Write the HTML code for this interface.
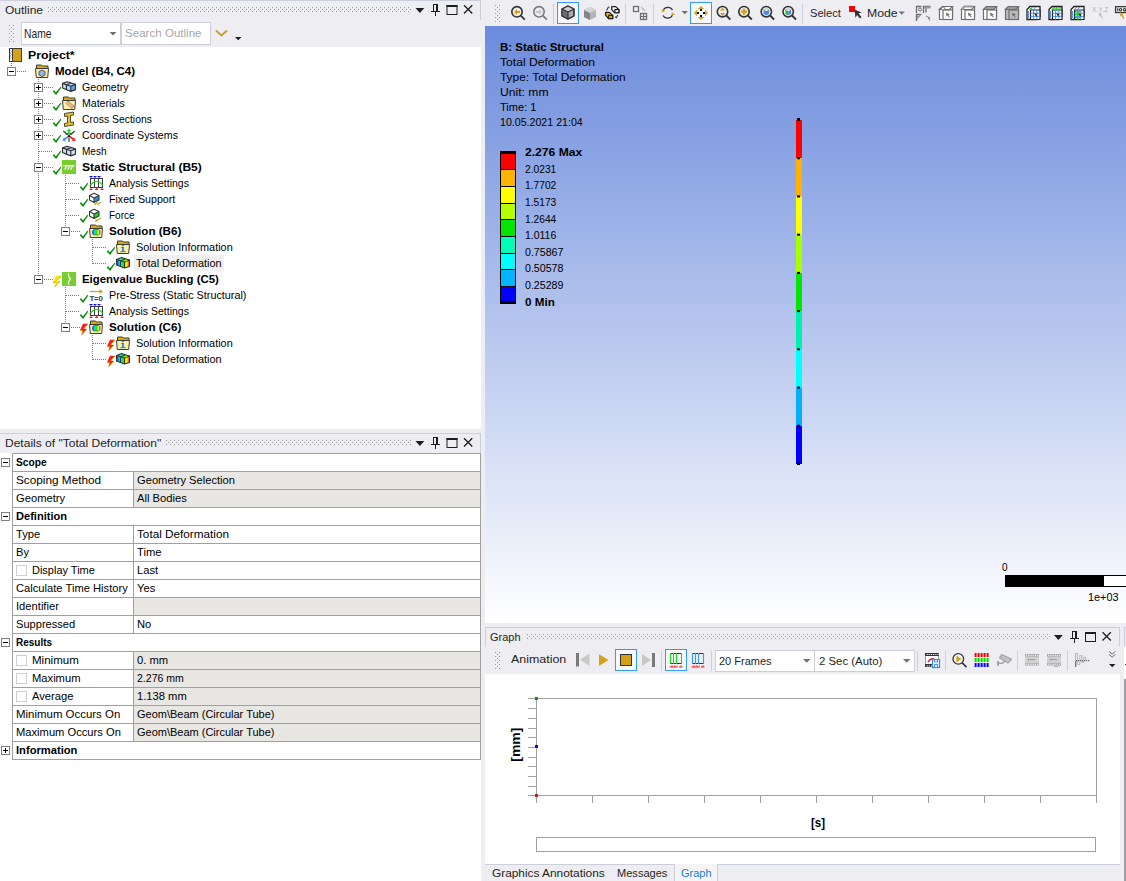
<!DOCTYPE html><html><head><meta charset="utf-8"><style>
*{box-sizing:border-box}
body{margin:0;width:1126px;height:881px;position:relative;overflow:hidden;background:#eeeef2;font-family:"Liberation Sans",sans-serif;font-size:12px;color:#000}
.a{position:absolute}
.t{position:absolute;white-space:nowrap;line-height:1;z-index:5}
svg{position:absolute;left:0;top:0}
</style></head><body><div class="a" style="left:0px;top:0px;width:481px;height:1px;background:#cccedb;"></div>
<div class="a" style="left:480px;top:0px;width:1px;height:20px;background:#cccedb;"></div>
<div class="a" style="left:21px;top:22px;width:100px;height:23px;background:#fff;border:1px solid #cccedb"></div>
<div class="a" style="left:121px;top:22px;width:90px;height:23px;background:#fff;border:1px solid #cccedb"></div>
<div class="a" style="left:0px;top:47px;width:481px;height:382px;background:#fff;"></div>
<div class="a" style="left:0px;top:433px;width:481px;height:1px;background:#cccedb;"></div>
<div class="a" style="left:480px;top:433px;width:1px;height:20px;background:#cccedb;"></div>
<div class="a" style="left:0px;top:453px;width:481px;height:428px;background:#fff;"></div>
<div class="a" style="left:134px;top:255px;width:90px;height:16px;background:#f0f0f0;"></div>
<div class="a" style="left:553px;top:4px;width:1px;height:20px;background:#ccd0dd;"></div>
<div class="a" style="left:625px;top:4px;width:1px;height:20px;background:#ccd0dd;"></div>
<div class="a" style="left:653px;top:4px;width:1px;height:20px;background:#ccd0dd;"></div>
<div class="a" style="left:802px;top:4px;width:1px;height:20px;background:#ccd0dd;"></div>
<div class="a" style="left:557px;top:2px;width:22px;height:22px;border:1px solid #3399ff;background:#f7f8fb"></div>
<div class="a" style="left:690px;top:2px;width:22px;height:22px;border:1px solid #3399ff;background:#f7f8fb"></div>
<div class="a" style="left:485px;top:26px;width:641px;height:597px;background:linear-gradient(#6b8bdc,#ffffff);"></div>
<div class="a" style="left:485px;top:627px;width:635px;height:1px;background:#cccedb;"></div>
<div class="a" style="left:485px;top:627px;width:1px;height:20px;background:#cccedb;"></div>
<div class="a" style="left:1119px;top:627px;width:1px;height:20px;background:#cccedb;"></div>
<div class="a" style="left:615px;top:649px;width:22px;height:22px;border:1px solid #3399ff;background:#f7f8fb"></div>
<div class="a" style="left:665px;top:649px;width:22px;height:22px;border:1px solid #3399ff;background:#f7f8fb"></div>
<div class="a" style="left:661px;top:651px;width:1px;height:20px;background:#ccd0dd;"></div>
<div class="a" style="left:711px;top:651px;width:1px;height:20px;background:#ccd0dd;"></div>
<div class="a" style="left:715px;top:650px;width:100px;height:22px;background:#fff;border:1px solid #cccedb"></div>
<div class="a" style="left:814px;top:650px;width:101px;height:22px;background:#fff;border:1px solid #cccedb"></div>
<div class="a" style="left:917px;top:651px;width:1px;height:20px;background:#ccd0dd;"></div>
<div class="a" style="left:945px;top:651px;width:1px;height:20px;background:#ccd0dd;"></div>
<div class="a" style="left:1017px;top:651px;width:1px;height:20px;background:#ccd0dd;"></div>
<div class="a" style="left:1067px;top:651px;width:1px;height:20px;background:#ccd0dd;"></div>
<div class="a" style="left:485px;top:674px;width:635px;height:190px;background:#fff;"></div>
<div class="a" style="left:485px;top:864px;width:635px;height:1px;background:#cccedb;"></div>
<div class="a" style="left:674px;top:864px;width:44px;height:17px;background:#f5f5f7;border-left:1px solid #cccedb;border-right:1px solid #cccedb"></div>
<div class="a" style="left:1124px;top:627px;width:2px;height:20px;background:#eeeef2;border-left:1px solid #cccedb;border-top:1px solid #cccedb"></div>
<div class="a" style="left:1124px;top:647px;width:2px;height:32px;background:#fff;"></div>
<div class="a" style="left:1124px;top:679px;width:2px;height:202px;background:#a0a0a0;"></div>
<svg width="1126" height="881" style="z-index:4"><rect x="48" y="7" width="1" height="1" fill="#999"/>
<rect x="48" y="11" width="1" height="1" fill="#999"/>
<rect x="52" y="7" width="1" height="1" fill="#999"/>
<rect x="52" y="11" width="1" height="1" fill="#999"/>
<rect x="56" y="7" width="1" height="1" fill="#999"/>
<rect x="56" y="11" width="1" height="1" fill="#999"/>
<rect x="60" y="7" width="1" height="1" fill="#999"/>
<rect x="60" y="11" width="1" height="1" fill="#999"/>
<rect x="64" y="7" width="1" height="1" fill="#999"/>
<rect x="64" y="11" width="1" height="1" fill="#999"/>
<rect x="68" y="7" width="1" height="1" fill="#999"/>
<rect x="68" y="11" width="1" height="1" fill="#999"/>
<rect x="72" y="7" width="1" height="1" fill="#999"/>
<rect x="72" y="11" width="1" height="1" fill="#999"/>
<rect x="76" y="7" width="1" height="1" fill="#999"/>
<rect x="76" y="11" width="1" height="1" fill="#999"/>
<rect x="80" y="7" width="1" height="1" fill="#999"/>
<rect x="80" y="11" width="1" height="1" fill="#999"/>
<rect x="84" y="7" width="1" height="1" fill="#999"/>
<rect x="84" y="11" width="1" height="1" fill="#999"/>
<rect x="88" y="7" width="1" height="1" fill="#999"/>
<rect x="88" y="11" width="1" height="1" fill="#999"/>
<rect x="92" y="7" width="1" height="1" fill="#999"/>
<rect x="92" y="11" width="1" height="1" fill="#999"/>
<rect x="96" y="7" width="1" height="1" fill="#999"/>
<rect x="96" y="11" width="1" height="1" fill="#999"/>
<rect x="100" y="7" width="1" height="1" fill="#999"/>
<rect x="100" y="11" width="1" height="1" fill="#999"/>
<rect x="104" y="7" width="1" height="1" fill="#999"/>
<rect x="104" y="11" width="1" height="1" fill="#999"/>
<rect x="108" y="7" width="1" height="1" fill="#999"/>
<rect x="108" y="11" width="1" height="1" fill="#999"/>
<rect x="112" y="7" width="1" height="1" fill="#999"/>
<rect x="112" y="11" width="1" height="1" fill="#999"/>
<rect x="116" y="7" width="1" height="1" fill="#999"/>
<rect x="116" y="11" width="1" height="1" fill="#999"/>
<rect x="120" y="7" width="1" height="1" fill="#999"/>
<rect x="120" y="11" width="1" height="1" fill="#999"/>
<rect x="124" y="7" width="1" height="1" fill="#999"/>
<rect x="124" y="11" width="1" height="1" fill="#999"/>
<rect x="128" y="7" width="1" height="1" fill="#999"/>
<rect x="128" y="11" width="1" height="1" fill="#999"/>
<rect x="132" y="7" width="1" height="1" fill="#999"/>
<rect x="132" y="11" width="1" height="1" fill="#999"/>
<rect x="136" y="7" width="1" height="1" fill="#999"/>
<rect x="136" y="11" width="1" height="1" fill="#999"/>
<rect x="140" y="7" width="1" height="1" fill="#999"/>
<rect x="140" y="11" width="1" height="1" fill="#999"/>
<rect x="144" y="7" width="1" height="1" fill="#999"/>
<rect x="144" y="11" width="1" height="1" fill="#999"/>
<rect x="148" y="7" width="1" height="1" fill="#999"/>
<rect x="148" y="11" width="1" height="1" fill="#999"/>
<rect x="152" y="7" width="1" height="1" fill="#999"/>
<rect x="152" y="11" width="1" height="1" fill="#999"/>
<rect x="156" y="7" width="1" height="1" fill="#999"/>
<rect x="156" y="11" width="1" height="1" fill="#999"/>
<rect x="160" y="7" width="1" height="1" fill="#999"/>
<rect x="160" y="11" width="1" height="1" fill="#999"/>
<rect x="164" y="7" width="1" height="1" fill="#999"/>
<rect x="164" y="11" width="1" height="1" fill="#999"/>
<rect x="168" y="7" width="1" height="1" fill="#999"/>
<rect x="168" y="11" width="1" height="1" fill="#999"/>
<rect x="172" y="7" width="1" height="1" fill="#999"/>
<rect x="172" y="11" width="1" height="1" fill="#999"/>
<rect x="176" y="7" width="1" height="1" fill="#999"/>
<rect x="176" y="11" width="1" height="1" fill="#999"/>
<rect x="180" y="7" width="1" height="1" fill="#999"/>
<rect x="180" y="11" width="1" height="1" fill="#999"/>
<rect x="184" y="7" width="1" height="1" fill="#999"/>
<rect x="184" y="11" width="1" height="1" fill="#999"/>
<rect x="188" y="7" width="1" height="1" fill="#999"/>
<rect x="188" y="11" width="1" height="1" fill="#999"/>
<rect x="192" y="7" width="1" height="1" fill="#999"/>
<rect x="192" y="11" width="1" height="1" fill="#999"/>
<rect x="196" y="7" width="1" height="1" fill="#999"/>
<rect x="196" y="11" width="1" height="1" fill="#999"/>
<rect x="200" y="7" width="1" height="1" fill="#999"/>
<rect x="200" y="11" width="1" height="1" fill="#999"/>
<rect x="204" y="7" width="1" height="1" fill="#999"/>
<rect x="204" y="11" width="1" height="1" fill="#999"/>
<rect x="208" y="7" width="1" height="1" fill="#999"/>
<rect x="208" y="11" width="1" height="1" fill="#999"/>
<rect x="212" y="7" width="1" height="1" fill="#999"/>
<rect x="212" y="11" width="1" height="1" fill="#999"/>
<rect x="216" y="7" width="1" height="1" fill="#999"/>
<rect x="216" y="11" width="1" height="1" fill="#999"/>
<rect x="220" y="7" width="1" height="1" fill="#999"/>
<rect x="220" y="11" width="1" height="1" fill="#999"/>
<rect x="224" y="7" width="1" height="1" fill="#999"/>
<rect x="224" y="11" width="1" height="1" fill="#999"/>
<rect x="228" y="7" width="1" height="1" fill="#999"/>
<rect x="228" y="11" width="1" height="1" fill="#999"/>
<rect x="232" y="7" width="1" height="1" fill="#999"/>
<rect x="232" y="11" width="1" height="1" fill="#999"/>
<rect x="236" y="7" width="1" height="1" fill="#999"/>
<rect x="236" y="11" width="1" height="1" fill="#999"/>
<rect x="240" y="7" width="1" height="1" fill="#999"/>
<rect x="240" y="11" width="1" height="1" fill="#999"/>
<rect x="244" y="7" width="1" height="1" fill="#999"/>
<rect x="244" y="11" width="1" height="1" fill="#999"/>
<rect x="248" y="7" width="1" height="1" fill="#999"/>
<rect x="248" y="11" width="1" height="1" fill="#999"/>
<rect x="252" y="7" width="1" height="1" fill="#999"/>
<rect x="252" y="11" width="1" height="1" fill="#999"/>
<rect x="256" y="7" width="1" height="1" fill="#999"/>
<rect x="256" y="11" width="1" height="1" fill="#999"/>
<rect x="260" y="7" width="1" height="1" fill="#999"/>
<rect x="260" y="11" width="1" height="1" fill="#999"/>
<rect x="264" y="7" width="1" height="1" fill="#999"/>
<rect x="264" y="11" width="1" height="1" fill="#999"/>
<rect x="268" y="7" width="1" height="1" fill="#999"/>
<rect x="268" y="11" width="1" height="1" fill="#999"/>
<rect x="272" y="7" width="1" height="1" fill="#999"/>
<rect x="272" y="11" width="1" height="1" fill="#999"/>
<rect x="276" y="7" width="1" height="1" fill="#999"/>
<rect x="276" y="11" width="1" height="1" fill="#999"/>
<rect x="280" y="7" width="1" height="1" fill="#999"/>
<rect x="280" y="11" width="1" height="1" fill="#999"/>
<rect x="284" y="7" width="1" height="1" fill="#999"/>
<rect x="284" y="11" width="1" height="1" fill="#999"/>
<rect x="288" y="7" width="1" height="1" fill="#999"/>
<rect x="288" y="11" width="1" height="1" fill="#999"/>
<rect x="292" y="7" width="1" height="1" fill="#999"/>
<rect x="292" y="11" width="1" height="1" fill="#999"/>
<rect x="296" y="7" width="1" height="1" fill="#999"/>
<rect x="296" y="11" width="1" height="1" fill="#999"/>
<rect x="300" y="7" width="1" height="1" fill="#999"/>
<rect x="300" y="11" width="1" height="1" fill="#999"/>
<rect x="304" y="7" width="1" height="1" fill="#999"/>
<rect x="304" y="11" width="1" height="1" fill="#999"/>
<rect x="308" y="7" width="1" height="1" fill="#999"/>
<rect x="308" y="11" width="1" height="1" fill="#999"/>
<rect x="312" y="7" width="1" height="1" fill="#999"/>
<rect x="312" y="11" width="1" height="1" fill="#999"/>
<rect x="316" y="7" width="1" height="1" fill="#999"/>
<rect x="316" y="11" width="1" height="1" fill="#999"/>
<rect x="320" y="7" width="1" height="1" fill="#999"/>
<rect x="320" y="11" width="1" height="1" fill="#999"/>
<rect x="324" y="7" width="1" height="1" fill="#999"/>
<rect x="324" y="11" width="1" height="1" fill="#999"/>
<rect x="328" y="7" width="1" height="1" fill="#999"/>
<rect x="328" y="11" width="1" height="1" fill="#999"/>
<rect x="332" y="7" width="1" height="1" fill="#999"/>
<rect x="332" y="11" width="1" height="1" fill="#999"/>
<rect x="336" y="7" width="1" height="1" fill="#999"/>
<rect x="336" y="11" width="1" height="1" fill="#999"/>
<rect x="340" y="7" width="1" height="1" fill="#999"/>
<rect x="340" y="11" width="1" height="1" fill="#999"/>
<rect x="344" y="7" width="1" height="1" fill="#999"/>
<rect x="344" y="11" width="1" height="1" fill="#999"/>
<rect x="348" y="7" width="1" height="1" fill="#999"/>
<rect x="348" y="11" width="1" height="1" fill="#999"/>
<rect x="352" y="7" width="1" height="1" fill="#999"/>
<rect x="352" y="11" width="1" height="1" fill="#999"/>
<rect x="356" y="7" width="1" height="1" fill="#999"/>
<rect x="356" y="11" width="1" height="1" fill="#999"/>
<rect x="360" y="7" width="1" height="1" fill="#999"/>
<rect x="360" y="11" width="1" height="1" fill="#999"/>
<rect x="364" y="7" width="1" height="1" fill="#999"/>
<rect x="364" y="11" width="1" height="1" fill="#999"/>
<rect x="368" y="7" width="1" height="1" fill="#999"/>
<rect x="368" y="11" width="1" height="1" fill="#999"/>
<rect x="372" y="7" width="1" height="1" fill="#999"/>
<rect x="372" y="11" width="1" height="1" fill="#999"/>
<rect x="376" y="7" width="1" height="1" fill="#999"/>
<rect x="376" y="11" width="1" height="1" fill="#999"/>
<rect x="380" y="7" width="1" height="1" fill="#999"/>
<rect x="380" y="11" width="1" height="1" fill="#999"/>
<rect x="384" y="7" width="1" height="1" fill="#999"/>
<rect x="384" y="11" width="1" height="1" fill="#999"/>
<rect x="388" y="7" width="1" height="1" fill="#999"/>
<rect x="388" y="11" width="1" height="1" fill="#999"/>
<rect x="392" y="7" width="1" height="1" fill="#999"/>
<rect x="392" y="11" width="1" height="1" fill="#999"/>
<rect x="396" y="7" width="1" height="1" fill="#999"/>
<rect x="396" y="11" width="1" height="1" fill="#999"/>
<rect x="400" y="7" width="1" height="1" fill="#999"/>
<rect x="400" y="11" width="1" height="1" fill="#999"/>
<rect x="404" y="7" width="1" height="1" fill="#999"/>
<rect x="404" y="11" width="1" height="1" fill="#999"/>
<rect x="408" y="7" width="1" height="1" fill="#999"/>
<rect x="408" y="11" width="1" height="1" fill="#999"/>
<rect x="50" y="9" width="1" height="1" fill="#999"/>
<rect x="54" y="9" width="1" height="1" fill="#999"/>
<rect x="58" y="9" width="1" height="1" fill="#999"/>
<rect x="62" y="9" width="1" height="1" fill="#999"/>
<rect x="66" y="9" width="1" height="1" fill="#999"/>
<rect x="70" y="9" width="1" height="1" fill="#999"/>
<rect x="74" y="9" width="1" height="1" fill="#999"/>
<rect x="78" y="9" width="1" height="1" fill="#999"/>
<rect x="82" y="9" width="1" height="1" fill="#999"/>
<rect x="86" y="9" width="1" height="1" fill="#999"/>
<rect x="90" y="9" width="1" height="1" fill="#999"/>
<rect x="94" y="9" width="1" height="1" fill="#999"/>
<rect x="98" y="9" width="1" height="1" fill="#999"/>
<rect x="102" y="9" width="1" height="1" fill="#999"/>
<rect x="106" y="9" width="1" height="1" fill="#999"/>
<rect x="110" y="9" width="1" height="1" fill="#999"/>
<rect x="114" y="9" width="1" height="1" fill="#999"/>
<rect x="118" y="9" width="1" height="1" fill="#999"/>
<rect x="122" y="9" width="1" height="1" fill="#999"/>
<rect x="126" y="9" width="1" height="1" fill="#999"/>
<rect x="130" y="9" width="1" height="1" fill="#999"/>
<rect x="134" y="9" width="1" height="1" fill="#999"/>
<rect x="138" y="9" width="1" height="1" fill="#999"/>
<rect x="142" y="9" width="1" height="1" fill="#999"/>
<rect x="146" y="9" width="1" height="1" fill="#999"/>
<rect x="150" y="9" width="1" height="1" fill="#999"/>
<rect x="154" y="9" width="1" height="1" fill="#999"/>
<rect x="158" y="9" width="1" height="1" fill="#999"/>
<rect x="162" y="9" width="1" height="1" fill="#999"/>
<rect x="166" y="9" width="1" height="1" fill="#999"/>
<rect x="170" y="9" width="1" height="1" fill="#999"/>
<rect x="174" y="9" width="1" height="1" fill="#999"/>
<rect x="178" y="9" width="1" height="1" fill="#999"/>
<rect x="182" y="9" width="1" height="1" fill="#999"/>
<rect x="186" y="9" width="1" height="1" fill="#999"/>
<rect x="190" y="9" width="1" height="1" fill="#999"/>
<rect x="194" y="9" width="1" height="1" fill="#999"/>
<rect x="198" y="9" width="1" height="1" fill="#999"/>
<rect x="202" y="9" width="1" height="1" fill="#999"/>
<rect x="206" y="9" width="1" height="1" fill="#999"/>
<rect x="210" y="9" width="1" height="1" fill="#999"/>
<rect x="214" y="9" width="1" height="1" fill="#999"/>
<rect x="218" y="9" width="1" height="1" fill="#999"/>
<rect x="222" y="9" width="1" height="1" fill="#999"/>
<rect x="226" y="9" width="1" height="1" fill="#999"/>
<rect x="230" y="9" width="1" height="1" fill="#999"/>
<rect x="234" y="9" width="1" height="1" fill="#999"/>
<rect x="238" y="9" width="1" height="1" fill="#999"/>
<rect x="242" y="9" width="1" height="1" fill="#999"/>
<rect x="246" y="9" width="1" height="1" fill="#999"/>
<rect x="250" y="9" width="1" height="1" fill="#999"/>
<rect x="254" y="9" width="1" height="1" fill="#999"/>
<rect x="258" y="9" width="1" height="1" fill="#999"/>
<rect x="262" y="9" width="1" height="1" fill="#999"/>
<rect x="266" y="9" width="1" height="1" fill="#999"/>
<rect x="270" y="9" width="1" height="1" fill="#999"/>
<rect x="274" y="9" width="1" height="1" fill="#999"/>
<rect x="278" y="9" width="1" height="1" fill="#999"/>
<rect x="282" y="9" width="1" height="1" fill="#999"/>
<rect x="286" y="9" width="1" height="1" fill="#999"/>
<rect x="290" y="9" width="1" height="1" fill="#999"/>
<rect x="294" y="9" width="1" height="1" fill="#999"/>
<rect x="298" y="9" width="1" height="1" fill="#999"/>
<rect x="302" y="9" width="1" height="1" fill="#999"/>
<rect x="306" y="9" width="1" height="1" fill="#999"/>
<rect x="310" y="9" width="1" height="1" fill="#999"/>
<rect x="314" y="9" width="1" height="1" fill="#999"/>
<rect x="318" y="9" width="1" height="1" fill="#999"/>
<rect x="322" y="9" width="1" height="1" fill="#999"/>
<rect x="326" y="9" width="1" height="1" fill="#999"/>
<rect x="330" y="9" width="1" height="1" fill="#999"/>
<rect x="334" y="9" width="1" height="1" fill="#999"/>
<rect x="338" y="9" width="1" height="1" fill="#999"/>
<rect x="342" y="9" width="1" height="1" fill="#999"/>
<rect x="346" y="9" width="1" height="1" fill="#999"/>
<rect x="350" y="9" width="1" height="1" fill="#999"/>
<rect x="354" y="9" width="1" height="1" fill="#999"/>
<rect x="358" y="9" width="1" height="1" fill="#999"/>
<rect x="362" y="9" width="1" height="1" fill="#999"/>
<rect x="366" y="9" width="1" height="1" fill="#999"/>
<rect x="370" y="9" width="1" height="1" fill="#999"/>
<rect x="374" y="9" width="1" height="1" fill="#999"/>
<rect x="378" y="9" width="1" height="1" fill="#999"/>
<rect x="382" y="9" width="1" height="1" fill="#999"/>
<rect x="386" y="9" width="1" height="1" fill="#999"/>
<rect x="390" y="9" width="1" height="1" fill="#999"/>
<rect x="394" y="9" width="1" height="1" fill="#999"/>
<rect x="398" y="9" width="1" height="1" fill="#999"/>
<rect x="402" y="9" width="1" height="1" fill="#999"/>
<rect x="406" y="9" width="1" height="1" fill="#999"/>
<rect x="410" y="9" width="1" height="1" fill="#999"/>
<path d="M415.5 8h8.8l-4.4 5z" fill="#1e1e1e"/>
<g fill="#1e1e1e" shape-rendering="crispEdges"><rect x="433" y="4" width="1" height="7"/><rect x="436" y="4" width="2" height="7"/><rect x="433" y="4" width="5" height="1"/><rect x="431" y="11" width="9" height="1"/><rect x="435" y="12" width="1" height="3.5"/></g>
<rect x="447.0" y="5.5" width="10" height="9" fill="none" stroke="#1e1e1e"/><rect x="446.5" y="5" width="11" height="2" fill="#1e1e1e"/>
<path d="M464 5.2l8.3 8.3M472.3 5.2l-8.3 8.3" stroke="#1e1e1e" stroke-width="1.3"/>
<rect x="9" y="25" width="1" height="1" fill="#999"/>
<rect x="13" y="25" width="1" height="1" fill="#999"/>
<rect x="9" y="29" width="1" height="1" fill="#999"/>
<rect x="13" y="29" width="1" height="1" fill="#999"/>
<rect x="9" y="33" width="1" height="1" fill="#999"/>
<rect x="13" y="33" width="1" height="1" fill="#999"/>
<rect x="9" y="37" width="1" height="1" fill="#999"/>
<rect x="13" y="37" width="1" height="1" fill="#999"/>
<rect x="9" y="41" width="1" height="1" fill="#999"/>
<rect x="13" y="41" width="1" height="1" fill="#999"/>
<rect x="11" y="27" width="1" height="1" fill="#999"/>
<rect x="11" y="31" width="1" height="1" fill="#999"/>
<rect x="11" y="35" width="1" height="1" fill="#999"/>
<rect x="11" y="39" width="1" height="1" fill="#999"/>
<path d="M109.5 32h7l-3.5 3.5z" fill="#717171"/>
<path d="M216 30.5l5.5 5 5.5-5" fill="none" stroke="#c9a227" stroke-width="2"/>
<path d="M235 37h6.5l-3.25 3.25z" fill="#1e1e1e"/>
<rect x="166" y="440" width="1" height="1" fill="#999"/>
<rect x="166" y="444" width="1" height="1" fill="#999"/>
<rect x="170" y="440" width="1" height="1" fill="#999"/>
<rect x="170" y="444" width="1" height="1" fill="#999"/>
<rect x="174" y="440" width="1" height="1" fill="#999"/>
<rect x="174" y="444" width="1" height="1" fill="#999"/>
<rect x="178" y="440" width="1" height="1" fill="#999"/>
<rect x="178" y="444" width="1" height="1" fill="#999"/>
<rect x="182" y="440" width="1" height="1" fill="#999"/>
<rect x="182" y="444" width="1" height="1" fill="#999"/>
<rect x="186" y="440" width="1" height="1" fill="#999"/>
<rect x="186" y="444" width="1" height="1" fill="#999"/>
<rect x="190" y="440" width="1" height="1" fill="#999"/>
<rect x="190" y="444" width="1" height="1" fill="#999"/>
<rect x="194" y="440" width="1" height="1" fill="#999"/>
<rect x="194" y="444" width="1" height="1" fill="#999"/>
<rect x="198" y="440" width="1" height="1" fill="#999"/>
<rect x="198" y="444" width="1" height="1" fill="#999"/>
<rect x="202" y="440" width="1" height="1" fill="#999"/>
<rect x="202" y="444" width="1" height="1" fill="#999"/>
<rect x="206" y="440" width="1" height="1" fill="#999"/>
<rect x="206" y="444" width="1" height="1" fill="#999"/>
<rect x="210" y="440" width="1" height="1" fill="#999"/>
<rect x="210" y="444" width="1" height="1" fill="#999"/>
<rect x="214" y="440" width="1" height="1" fill="#999"/>
<rect x="214" y="444" width="1" height="1" fill="#999"/>
<rect x="218" y="440" width="1" height="1" fill="#999"/>
<rect x="218" y="444" width="1" height="1" fill="#999"/>
<rect x="222" y="440" width="1" height="1" fill="#999"/>
<rect x="222" y="444" width="1" height="1" fill="#999"/>
<rect x="226" y="440" width="1" height="1" fill="#999"/>
<rect x="226" y="444" width="1" height="1" fill="#999"/>
<rect x="230" y="440" width="1" height="1" fill="#999"/>
<rect x="230" y="444" width="1" height="1" fill="#999"/>
<rect x="234" y="440" width="1" height="1" fill="#999"/>
<rect x="234" y="444" width="1" height="1" fill="#999"/>
<rect x="238" y="440" width="1" height="1" fill="#999"/>
<rect x="238" y="444" width="1" height="1" fill="#999"/>
<rect x="242" y="440" width="1" height="1" fill="#999"/>
<rect x="242" y="444" width="1" height="1" fill="#999"/>
<rect x="246" y="440" width="1" height="1" fill="#999"/>
<rect x="246" y="444" width="1" height="1" fill="#999"/>
<rect x="250" y="440" width="1" height="1" fill="#999"/>
<rect x="250" y="444" width="1" height="1" fill="#999"/>
<rect x="254" y="440" width="1" height="1" fill="#999"/>
<rect x="254" y="444" width="1" height="1" fill="#999"/>
<rect x="258" y="440" width="1" height="1" fill="#999"/>
<rect x="258" y="444" width="1" height="1" fill="#999"/>
<rect x="262" y="440" width="1" height="1" fill="#999"/>
<rect x="262" y="444" width="1" height="1" fill="#999"/>
<rect x="266" y="440" width="1" height="1" fill="#999"/>
<rect x="266" y="444" width="1" height="1" fill="#999"/>
<rect x="270" y="440" width="1" height="1" fill="#999"/>
<rect x="270" y="444" width="1" height="1" fill="#999"/>
<rect x="274" y="440" width="1" height="1" fill="#999"/>
<rect x="274" y="444" width="1" height="1" fill="#999"/>
<rect x="278" y="440" width="1" height="1" fill="#999"/>
<rect x="278" y="444" width="1" height="1" fill="#999"/>
<rect x="282" y="440" width="1" height="1" fill="#999"/>
<rect x="282" y="444" width="1" height="1" fill="#999"/>
<rect x="286" y="440" width="1" height="1" fill="#999"/>
<rect x="286" y="444" width="1" height="1" fill="#999"/>
<rect x="290" y="440" width="1" height="1" fill="#999"/>
<rect x="290" y="444" width="1" height="1" fill="#999"/>
<rect x="294" y="440" width="1" height="1" fill="#999"/>
<rect x="294" y="444" width="1" height="1" fill="#999"/>
<rect x="298" y="440" width="1" height="1" fill="#999"/>
<rect x="298" y="444" width="1" height="1" fill="#999"/>
<rect x="302" y="440" width="1" height="1" fill="#999"/>
<rect x="302" y="444" width="1" height="1" fill="#999"/>
<rect x="306" y="440" width="1" height="1" fill="#999"/>
<rect x="306" y="444" width="1" height="1" fill="#999"/>
<rect x="310" y="440" width="1" height="1" fill="#999"/>
<rect x="310" y="444" width="1" height="1" fill="#999"/>
<rect x="314" y="440" width="1" height="1" fill="#999"/>
<rect x="314" y="444" width="1" height="1" fill="#999"/>
<rect x="318" y="440" width="1" height="1" fill="#999"/>
<rect x="318" y="444" width="1" height="1" fill="#999"/>
<rect x="322" y="440" width="1" height="1" fill="#999"/>
<rect x="322" y="444" width="1" height="1" fill="#999"/>
<rect x="326" y="440" width="1" height="1" fill="#999"/>
<rect x="326" y="444" width="1" height="1" fill="#999"/>
<rect x="330" y="440" width="1" height="1" fill="#999"/>
<rect x="330" y="444" width="1" height="1" fill="#999"/>
<rect x="334" y="440" width="1" height="1" fill="#999"/>
<rect x="334" y="444" width="1" height="1" fill="#999"/>
<rect x="338" y="440" width="1" height="1" fill="#999"/>
<rect x="338" y="444" width="1" height="1" fill="#999"/>
<rect x="342" y="440" width="1" height="1" fill="#999"/>
<rect x="342" y="444" width="1" height="1" fill="#999"/>
<rect x="346" y="440" width="1" height="1" fill="#999"/>
<rect x="346" y="444" width="1" height="1" fill="#999"/>
<rect x="350" y="440" width="1" height="1" fill="#999"/>
<rect x="350" y="444" width="1" height="1" fill="#999"/>
<rect x="354" y="440" width="1" height="1" fill="#999"/>
<rect x="354" y="444" width="1" height="1" fill="#999"/>
<rect x="358" y="440" width="1" height="1" fill="#999"/>
<rect x="358" y="444" width="1" height="1" fill="#999"/>
<rect x="362" y="440" width="1" height="1" fill="#999"/>
<rect x="362" y="444" width="1" height="1" fill="#999"/>
<rect x="366" y="440" width="1" height="1" fill="#999"/>
<rect x="366" y="444" width="1" height="1" fill="#999"/>
<rect x="370" y="440" width="1" height="1" fill="#999"/>
<rect x="370" y="444" width="1" height="1" fill="#999"/>
<rect x="374" y="440" width="1" height="1" fill="#999"/>
<rect x="374" y="444" width="1" height="1" fill="#999"/>
<rect x="378" y="440" width="1" height="1" fill="#999"/>
<rect x="378" y="444" width="1" height="1" fill="#999"/>
<rect x="382" y="440" width="1" height="1" fill="#999"/>
<rect x="382" y="444" width="1" height="1" fill="#999"/>
<rect x="386" y="440" width="1" height="1" fill="#999"/>
<rect x="386" y="444" width="1" height="1" fill="#999"/>
<rect x="390" y="440" width="1" height="1" fill="#999"/>
<rect x="390" y="444" width="1" height="1" fill="#999"/>
<rect x="394" y="440" width="1" height="1" fill="#999"/>
<rect x="394" y="444" width="1" height="1" fill="#999"/>
<rect x="398" y="440" width="1" height="1" fill="#999"/>
<rect x="398" y="444" width="1" height="1" fill="#999"/>
<rect x="402" y="440" width="1" height="1" fill="#999"/>
<rect x="402" y="444" width="1" height="1" fill="#999"/>
<rect x="406" y="440" width="1" height="1" fill="#999"/>
<rect x="406" y="444" width="1" height="1" fill="#999"/>
<rect x="410" y="440" width="1" height="1" fill="#999"/>
<rect x="410" y="444" width="1" height="1" fill="#999"/>
<rect x="168" y="442" width="1" height="1" fill="#999"/>
<rect x="172" y="442" width="1" height="1" fill="#999"/>
<rect x="176" y="442" width="1" height="1" fill="#999"/>
<rect x="180" y="442" width="1" height="1" fill="#999"/>
<rect x="184" y="442" width="1" height="1" fill="#999"/>
<rect x="188" y="442" width="1" height="1" fill="#999"/>
<rect x="192" y="442" width="1" height="1" fill="#999"/>
<rect x="196" y="442" width="1" height="1" fill="#999"/>
<rect x="200" y="442" width="1" height="1" fill="#999"/>
<rect x="204" y="442" width="1" height="1" fill="#999"/>
<rect x="208" y="442" width="1" height="1" fill="#999"/>
<rect x="212" y="442" width="1" height="1" fill="#999"/>
<rect x="216" y="442" width="1" height="1" fill="#999"/>
<rect x="220" y="442" width="1" height="1" fill="#999"/>
<rect x="224" y="442" width="1" height="1" fill="#999"/>
<rect x="228" y="442" width="1" height="1" fill="#999"/>
<rect x="232" y="442" width="1" height="1" fill="#999"/>
<rect x="236" y="442" width="1" height="1" fill="#999"/>
<rect x="240" y="442" width="1" height="1" fill="#999"/>
<rect x="244" y="442" width="1" height="1" fill="#999"/>
<rect x="248" y="442" width="1" height="1" fill="#999"/>
<rect x="252" y="442" width="1" height="1" fill="#999"/>
<rect x="256" y="442" width="1" height="1" fill="#999"/>
<rect x="260" y="442" width="1" height="1" fill="#999"/>
<rect x="264" y="442" width="1" height="1" fill="#999"/>
<rect x="268" y="442" width="1" height="1" fill="#999"/>
<rect x="272" y="442" width="1" height="1" fill="#999"/>
<rect x="276" y="442" width="1" height="1" fill="#999"/>
<rect x="280" y="442" width="1" height="1" fill="#999"/>
<rect x="284" y="442" width="1" height="1" fill="#999"/>
<rect x="288" y="442" width="1" height="1" fill="#999"/>
<rect x="292" y="442" width="1" height="1" fill="#999"/>
<rect x="296" y="442" width="1" height="1" fill="#999"/>
<rect x="300" y="442" width="1" height="1" fill="#999"/>
<rect x="304" y="442" width="1" height="1" fill="#999"/>
<rect x="308" y="442" width="1" height="1" fill="#999"/>
<rect x="312" y="442" width="1" height="1" fill="#999"/>
<rect x="316" y="442" width="1" height="1" fill="#999"/>
<rect x="320" y="442" width="1" height="1" fill="#999"/>
<rect x="324" y="442" width="1" height="1" fill="#999"/>
<rect x="328" y="442" width="1" height="1" fill="#999"/>
<rect x="332" y="442" width="1" height="1" fill="#999"/>
<rect x="336" y="442" width="1" height="1" fill="#999"/>
<rect x="340" y="442" width="1" height="1" fill="#999"/>
<rect x="344" y="442" width="1" height="1" fill="#999"/>
<rect x="348" y="442" width="1" height="1" fill="#999"/>
<rect x="352" y="442" width="1" height="1" fill="#999"/>
<rect x="356" y="442" width="1" height="1" fill="#999"/>
<rect x="360" y="442" width="1" height="1" fill="#999"/>
<rect x="364" y="442" width="1" height="1" fill="#999"/>
<rect x="368" y="442" width="1" height="1" fill="#999"/>
<rect x="372" y="442" width="1" height="1" fill="#999"/>
<rect x="376" y="442" width="1" height="1" fill="#999"/>
<rect x="380" y="442" width="1" height="1" fill="#999"/>
<rect x="384" y="442" width="1" height="1" fill="#999"/>
<rect x="388" y="442" width="1" height="1" fill="#999"/>
<rect x="392" y="442" width="1" height="1" fill="#999"/>
<rect x="396" y="442" width="1" height="1" fill="#999"/>
<rect x="400" y="442" width="1" height="1" fill="#999"/>
<rect x="404" y="442" width="1" height="1" fill="#999"/>
<rect x="408" y="442" width="1" height="1" fill="#999"/>
<path d="M415.5 441h8.8l-4.4 5z" fill="#1e1e1e"/>
<g fill="#1e1e1e" shape-rendering="crispEdges"><rect x="433" y="437" width="1" height="7"/><rect x="436" y="437" width="2" height="7"/><rect x="433" y="437" width="5" height="1"/><rect x="431" y="444" width="9" height="1"/><rect x="435" y="445" width="1" height="3.5"/></g>
<rect x="447.0" y="438.5" width="10" height="9" fill="none" stroke="#1e1e1e"/><rect x="446.5" y="438" width="11" height="2" fill="#1e1e1e"/>
<path d="M464 438.2l8.3 8.3M472.3 438.2l-8.3 8.3" stroke="#1e1e1e" stroke-width="1.3"/>
<rect x="11" y="63" width="1" height="1" fill="#7a7a7a"/>
<rect x="11" y="65" width="1" height="1" fill="#7a7a7a"/>
<rect x="38" y="79" width="1" height="1" fill="#7a7a7a"/>
<rect x="38" y="81" width="1" height="1" fill="#7a7a7a"/>
<rect x="38" y="83" width="1" height="1" fill="#7a7a7a"/>
<rect x="38" y="85" width="1" height="1" fill="#7a7a7a"/>
<rect x="38" y="87" width="1" height="1" fill="#7a7a7a"/>
<rect x="38" y="89" width="1" height="1" fill="#7a7a7a"/>
<rect x="38" y="91" width="1" height="1" fill="#7a7a7a"/>
<rect x="38" y="93" width="1" height="1" fill="#7a7a7a"/>
<rect x="38" y="95" width="1" height="1" fill="#7a7a7a"/>
<rect x="38" y="97" width="1" height="1" fill="#7a7a7a"/>
<rect x="38" y="99" width="1" height="1" fill="#7a7a7a"/>
<rect x="38" y="101" width="1" height="1" fill="#7a7a7a"/>
<rect x="38" y="103" width="1" height="1" fill="#7a7a7a"/>
<rect x="38" y="105" width="1" height="1" fill="#7a7a7a"/>
<rect x="38" y="107" width="1" height="1" fill="#7a7a7a"/>
<rect x="38" y="109" width="1" height="1" fill="#7a7a7a"/>
<rect x="38" y="111" width="1" height="1" fill="#7a7a7a"/>
<rect x="38" y="113" width="1" height="1" fill="#7a7a7a"/>
<rect x="38" y="115" width="1" height="1" fill="#7a7a7a"/>
<rect x="38" y="117" width="1" height="1" fill="#7a7a7a"/>
<rect x="38" y="119" width="1" height="1" fill="#7a7a7a"/>
<rect x="38" y="121" width="1" height="1" fill="#7a7a7a"/>
<rect x="38" y="123" width="1" height="1" fill="#7a7a7a"/>
<rect x="38" y="125" width="1" height="1" fill="#7a7a7a"/>
<rect x="38" y="127" width="1" height="1" fill="#7a7a7a"/>
<rect x="38" y="129" width="1" height="1" fill="#7a7a7a"/>
<rect x="38" y="131" width="1" height="1" fill="#7a7a7a"/>
<rect x="38" y="133" width="1" height="1" fill="#7a7a7a"/>
<rect x="38" y="135" width="1" height="1" fill="#7a7a7a"/>
<rect x="38" y="137" width="1" height="1" fill="#7a7a7a"/>
<rect x="38" y="139" width="1" height="1" fill="#7a7a7a"/>
<rect x="38" y="141" width="1" height="1" fill="#7a7a7a"/>
<rect x="38" y="143" width="1" height="1" fill="#7a7a7a"/>
<rect x="38" y="145" width="1" height="1" fill="#7a7a7a"/>
<rect x="38" y="147" width="1" height="1" fill="#7a7a7a"/>
<rect x="38" y="149" width="1" height="1" fill="#7a7a7a"/>
<rect x="38" y="151" width="1" height="1" fill="#7a7a7a"/>
<rect x="38" y="153" width="1" height="1" fill="#7a7a7a"/>
<rect x="38" y="155" width="1" height="1" fill="#7a7a7a"/>
<rect x="38" y="157" width="1" height="1" fill="#7a7a7a"/>
<rect x="38" y="159" width="1" height="1" fill="#7a7a7a"/>
<rect x="38" y="161" width="1" height="1" fill="#7a7a7a"/>
<rect x="38" y="163" width="1" height="1" fill="#7a7a7a"/>
<rect x="38" y="165" width="1" height="1" fill="#7a7a7a"/>
<rect x="38" y="167" width="1" height="1" fill="#7a7a7a"/>
<rect x="38" y="169" width="1" height="1" fill="#7a7a7a"/>
<rect x="38" y="171" width="1" height="1" fill="#7a7a7a"/>
<rect x="38" y="173" width="1" height="1" fill="#7a7a7a"/>
<rect x="38" y="175" width="1" height="1" fill="#7a7a7a"/>
<rect x="38" y="177" width="1" height="1" fill="#7a7a7a"/>
<rect x="38" y="179" width="1" height="1" fill="#7a7a7a"/>
<rect x="38" y="181" width="1" height="1" fill="#7a7a7a"/>
<rect x="38" y="183" width="1" height="1" fill="#7a7a7a"/>
<rect x="38" y="185" width="1" height="1" fill="#7a7a7a"/>
<rect x="38" y="187" width="1" height="1" fill="#7a7a7a"/>
<rect x="38" y="189" width="1" height="1" fill="#7a7a7a"/>
<rect x="38" y="191" width="1" height="1" fill="#7a7a7a"/>
<rect x="38" y="193" width="1" height="1" fill="#7a7a7a"/>
<rect x="38" y="195" width="1" height="1" fill="#7a7a7a"/>
<rect x="38" y="197" width="1" height="1" fill="#7a7a7a"/>
<rect x="38" y="199" width="1" height="1" fill="#7a7a7a"/>
<rect x="38" y="201" width="1" height="1" fill="#7a7a7a"/>
<rect x="38" y="203" width="1" height="1" fill="#7a7a7a"/>
<rect x="38" y="205" width="1" height="1" fill="#7a7a7a"/>
<rect x="38" y="207" width="1" height="1" fill="#7a7a7a"/>
<rect x="38" y="209" width="1" height="1" fill="#7a7a7a"/>
<rect x="38" y="211" width="1" height="1" fill="#7a7a7a"/>
<rect x="38" y="213" width="1" height="1" fill="#7a7a7a"/>
<rect x="38" y="215" width="1" height="1" fill="#7a7a7a"/>
<rect x="38" y="217" width="1" height="1" fill="#7a7a7a"/>
<rect x="38" y="219" width="1" height="1" fill="#7a7a7a"/>
<rect x="38" y="221" width="1" height="1" fill="#7a7a7a"/>
<rect x="38" y="223" width="1" height="1" fill="#7a7a7a"/>
<rect x="38" y="225" width="1" height="1" fill="#7a7a7a"/>
<rect x="38" y="227" width="1" height="1" fill="#7a7a7a"/>
<rect x="38" y="229" width="1" height="1" fill="#7a7a7a"/>
<rect x="38" y="231" width="1" height="1" fill="#7a7a7a"/>
<rect x="38" y="233" width="1" height="1" fill="#7a7a7a"/>
<rect x="38" y="235" width="1" height="1" fill="#7a7a7a"/>
<rect x="38" y="237" width="1" height="1" fill="#7a7a7a"/>
<rect x="38" y="239" width="1" height="1" fill="#7a7a7a"/>
<rect x="38" y="241" width="1" height="1" fill="#7a7a7a"/>
<rect x="38" y="243" width="1" height="1" fill="#7a7a7a"/>
<rect x="38" y="245" width="1" height="1" fill="#7a7a7a"/>
<rect x="38" y="247" width="1" height="1" fill="#7a7a7a"/>
<rect x="38" y="249" width="1" height="1" fill="#7a7a7a"/>
<rect x="38" y="251" width="1" height="1" fill="#7a7a7a"/>
<rect x="38" y="253" width="1" height="1" fill="#7a7a7a"/>
<rect x="38" y="255" width="1" height="1" fill="#7a7a7a"/>
<rect x="38" y="257" width="1" height="1" fill="#7a7a7a"/>
<rect x="38" y="259" width="1" height="1" fill="#7a7a7a"/>
<rect x="38" y="261" width="1" height="1" fill="#7a7a7a"/>
<rect x="38" y="263" width="1" height="1" fill="#7a7a7a"/>
<rect x="38" y="265" width="1" height="1" fill="#7a7a7a"/>
<rect x="38" y="267" width="1" height="1" fill="#7a7a7a"/>
<rect x="38" y="269" width="1" height="1" fill="#7a7a7a"/>
<rect x="38" y="271" width="1" height="1" fill="#7a7a7a"/>
<rect x="38" y="273" width="1" height="1" fill="#7a7a7a"/>
<rect x="38" y="275" width="1" height="1" fill="#7a7a7a"/>
<rect x="38" y="277" width="1" height="1" fill="#7a7a7a"/>
<rect x="65" y="175" width="1" height="1" fill="#7a7a7a"/>
<rect x="65" y="177" width="1" height="1" fill="#7a7a7a"/>
<rect x="65" y="179" width="1" height="1" fill="#7a7a7a"/>
<rect x="65" y="181" width="1" height="1" fill="#7a7a7a"/>
<rect x="65" y="183" width="1" height="1" fill="#7a7a7a"/>
<rect x="65" y="185" width="1" height="1" fill="#7a7a7a"/>
<rect x="65" y="187" width="1" height="1" fill="#7a7a7a"/>
<rect x="65" y="189" width="1" height="1" fill="#7a7a7a"/>
<rect x="65" y="191" width="1" height="1" fill="#7a7a7a"/>
<rect x="65" y="193" width="1" height="1" fill="#7a7a7a"/>
<rect x="65" y="195" width="1" height="1" fill="#7a7a7a"/>
<rect x="65" y="197" width="1" height="1" fill="#7a7a7a"/>
<rect x="65" y="199" width="1" height="1" fill="#7a7a7a"/>
<rect x="65" y="201" width="1" height="1" fill="#7a7a7a"/>
<rect x="65" y="203" width="1" height="1" fill="#7a7a7a"/>
<rect x="65" y="205" width="1" height="1" fill="#7a7a7a"/>
<rect x="65" y="207" width="1" height="1" fill="#7a7a7a"/>
<rect x="65" y="209" width="1" height="1" fill="#7a7a7a"/>
<rect x="65" y="211" width="1" height="1" fill="#7a7a7a"/>
<rect x="65" y="213" width="1" height="1" fill="#7a7a7a"/>
<rect x="65" y="215" width="1" height="1" fill="#7a7a7a"/>
<rect x="65" y="217" width="1" height="1" fill="#7a7a7a"/>
<rect x="65" y="219" width="1" height="1" fill="#7a7a7a"/>
<rect x="65" y="221" width="1" height="1" fill="#7a7a7a"/>
<rect x="65" y="223" width="1" height="1" fill="#7a7a7a"/>
<rect x="65" y="225" width="1" height="1" fill="#7a7a7a"/>
<rect x="65" y="227" width="1" height="1" fill="#7a7a7a"/>
<rect x="65" y="229" width="1" height="1" fill="#7a7a7a"/>
<rect x="92" y="239" width="1" height="1" fill="#7a7a7a"/>
<rect x="92" y="241" width="1" height="1" fill="#7a7a7a"/>
<rect x="92" y="243" width="1" height="1" fill="#7a7a7a"/>
<rect x="92" y="245" width="1" height="1" fill="#7a7a7a"/>
<rect x="92" y="247" width="1" height="1" fill="#7a7a7a"/>
<rect x="92" y="249" width="1" height="1" fill="#7a7a7a"/>
<rect x="92" y="251" width="1" height="1" fill="#7a7a7a"/>
<rect x="92" y="253" width="1" height="1" fill="#7a7a7a"/>
<rect x="92" y="255" width="1" height="1" fill="#7a7a7a"/>
<rect x="92" y="257" width="1" height="1" fill="#7a7a7a"/>
<rect x="92" y="259" width="1" height="1" fill="#7a7a7a"/>
<rect x="92" y="261" width="1" height="1" fill="#7a7a7a"/>
<rect x="92" y="263" width="1" height="1" fill="#7a7a7a"/>
<rect x="65" y="287" width="1" height="1" fill="#7a7a7a"/>
<rect x="65" y="289" width="1" height="1" fill="#7a7a7a"/>
<rect x="65" y="291" width="1" height="1" fill="#7a7a7a"/>
<rect x="65" y="293" width="1" height="1" fill="#7a7a7a"/>
<rect x="65" y="295" width="1" height="1" fill="#7a7a7a"/>
<rect x="65" y="297" width="1" height="1" fill="#7a7a7a"/>
<rect x="65" y="299" width="1" height="1" fill="#7a7a7a"/>
<rect x="65" y="301" width="1" height="1" fill="#7a7a7a"/>
<rect x="65" y="303" width="1" height="1" fill="#7a7a7a"/>
<rect x="65" y="305" width="1" height="1" fill="#7a7a7a"/>
<rect x="65" y="307" width="1" height="1" fill="#7a7a7a"/>
<rect x="65" y="309" width="1" height="1" fill="#7a7a7a"/>
<rect x="65" y="311" width="1" height="1" fill="#7a7a7a"/>
<rect x="65" y="313" width="1" height="1" fill="#7a7a7a"/>
<rect x="65" y="315" width="1" height="1" fill="#7a7a7a"/>
<rect x="65" y="317" width="1" height="1" fill="#7a7a7a"/>
<rect x="65" y="319" width="1" height="1" fill="#7a7a7a"/>
<rect x="65" y="321" width="1" height="1" fill="#7a7a7a"/>
<rect x="65" y="323" width="1" height="1" fill="#7a7a7a"/>
<rect x="65" y="325" width="1" height="1" fill="#7a7a7a"/>
<rect x="92" y="335" width="1" height="1" fill="#7a7a7a"/>
<rect x="92" y="337" width="1" height="1" fill="#7a7a7a"/>
<rect x="92" y="339" width="1" height="1" fill="#7a7a7a"/>
<rect x="92" y="341" width="1" height="1" fill="#7a7a7a"/>
<rect x="92" y="343" width="1" height="1" fill="#7a7a7a"/>
<rect x="92" y="345" width="1" height="1" fill="#7a7a7a"/>
<rect x="92" y="347" width="1" height="1" fill="#7a7a7a"/>
<rect x="92" y="349" width="1" height="1" fill="#7a7a7a"/>
<rect x="92" y="351" width="1" height="1" fill="#7a7a7a"/>
<rect x="92" y="353" width="1" height="1" fill="#7a7a7a"/>
<rect x="92" y="355" width="1" height="1" fill="#7a7a7a"/>
<rect x="92" y="357" width="1" height="1" fill="#7a7a7a"/>
<rect x="92" y="359" width="1" height="1" fill="#7a7a7a"/>
<rect x="7.5" y="67.5" width="8" height="8" fill="#fff" stroke="#7f7f7f"/>
<rect x="9" y="71" width="5" height="1" fill="#000"/>
<rect x="17" y="71" width="1" height="1" fill="#7a7a7a"/>
<rect x="19" y="71" width="1" height="1" fill="#7a7a7a"/>
<rect x="21" y="71" width="1" height="1" fill="#7a7a7a"/>
<rect x="23" y="71" width="1" height="1" fill="#7a7a7a"/>
<rect x="25" y="71" width="1" height="1" fill="#7a7a7a"/>
<rect x="34.5" y="83.5" width="8" height="8" fill="#fff" stroke="#7f7f7f"/>
<rect x="36" y="87" width="5" height="1" fill="#000"/>
<rect x="38" y="85" width="1" height="5" fill="#000"/>
<rect x="44" y="87" width="1" height="1" fill="#7a7a7a"/>
<rect x="46" y="87" width="1" height="1" fill="#7a7a7a"/>
<rect x="48" y="87" width="1" height="1" fill="#7a7a7a"/>
<rect x="50" y="87" width="1" height="1" fill="#7a7a7a"/>
<rect x="52" y="87" width="1" height="1" fill="#7a7a7a"/>
<rect x="34.5" y="99.5" width="8" height="8" fill="#fff" stroke="#7f7f7f"/>
<rect x="36" y="103" width="5" height="1" fill="#000"/>
<rect x="38" y="101" width="1" height="5" fill="#000"/>
<rect x="44" y="103" width="1" height="1" fill="#7a7a7a"/>
<rect x="46" y="103" width="1" height="1" fill="#7a7a7a"/>
<rect x="48" y="103" width="1" height="1" fill="#7a7a7a"/>
<rect x="50" y="103" width="1" height="1" fill="#7a7a7a"/>
<rect x="52" y="103" width="1" height="1" fill="#7a7a7a"/>
<rect x="34.5" y="115.5" width="8" height="8" fill="#fff" stroke="#7f7f7f"/>
<rect x="36" y="119" width="5" height="1" fill="#000"/>
<rect x="38" y="117" width="1" height="5" fill="#000"/>
<rect x="44" y="119" width="1" height="1" fill="#7a7a7a"/>
<rect x="46" y="119" width="1" height="1" fill="#7a7a7a"/>
<rect x="48" y="119" width="1" height="1" fill="#7a7a7a"/>
<rect x="50" y="119" width="1" height="1" fill="#7a7a7a"/>
<rect x="52" y="119" width="1" height="1" fill="#7a7a7a"/>
<rect x="34.5" y="131.5" width="8" height="8" fill="#fff" stroke="#7f7f7f"/>
<rect x="36" y="135" width="5" height="1" fill="#000"/>
<rect x="38" y="133" width="1" height="5" fill="#000"/>
<rect x="44" y="135" width="1" height="1" fill="#7a7a7a"/>
<rect x="46" y="135" width="1" height="1" fill="#7a7a7a"/>
<rect x="48" y="135" width="1" height="1" fill="#7a7a7a"/>
<rect x="50" y="135" width="1" height="1" fill="#7a7a7a"/>
<rect x="52" y="135" width="1" height="1" fill="#7a7a7a"/>
<rect x="39" y="151" width="1" height="1" fill="#7a7a7a"/>
<rect x="41" y="151" width="1" height="1" fill="#7a7a7a"/>
<rect x="43" y="151" width="1" height="1" fill="#7a7a7a"/>
<rect x="45" y="151" width="1" height="1" fill="#7a7a7a"/>
<rect x="47" y="151" width="1" height="1" fill="#7a7a7a"/>
<rect x="49" y="151" width="1" height="1" fill="#7a7a7a"/>
<rect x="51" y="151" width="1" height="1" fill="#7a7a7a"/>
<rect x="34.5" y="163.5" width="8" height="8" fill="#fff" stroke="#7f7f7f"/>
<rect x="36" y="167" width="5" height="1" fill="#000"/>
<rect x="44" y="167" width="1" height="1" fill="#7a7a7a"/>
<rect x="46" y="167" width="1" height="1" fill="#7a7a7a"/>
<rect x="48" y="167" width="1" height="1" fill="#7a7a7a"/>
<rect x="50" y="167" width="1" height="1" fill="#7a7a7a"/>
<rect x="52" y="167" width="1" height="1" fill="#7a7a7a"/>
<rect x="66" y="183" width="1" height="1" fill="#7a7a7a"/>
<rect x="68" y="183" width="1" height="1" fill="#7a7a7a"/>
<rect x="70" y="183" width="1" height="1" fill="#7a7a7a"/>
<rect x="72" y="183" width="1" height="1" fill="#7a7a7a"/>
<rect x="74" y="183" width="1" height="1" fill="#7a7a7a"/>
<rect x="76" y="183" width="1" height="1" fill="#7a7a7a"/>
<rect x="78" y="183" width="1" height="1" fill="#7a7a7a"/>
<rect x="66" y="199" width="1" height="1" fill="#7a7a7a"/>
<rect x="68" y="199" width="1" height="1" fill="#7a7a7a"/>
<rect x="70" y="199" width="1" height="1" fill="#7a7a7a"/>
<rect x="72" y="199" width="1" height="1" fill="#7a7a7a"/>
<rect x="74" y="199" width="1" height="1" fill="#7a7a7a"/>
<rect x="76" y="199" width="1" height="1" fill="#7a7a7a"/>
<rect x="78" y="199" width="1" height="1" fill="#7a7a7a"/>
<rect x="66" y="215" width="1" height="1" fill="#7a7a7a"/>
<rect x="68" y="215" width="1" height="1" fill="#7a7a7a"/>
<rect x="70" y="215" width="1" height="1" fill="#7a7a7a"/>
<rect x="72" y="215" width="1" height="1" fill="#7a7a7a"/>
<rect x="74" y="215" width="1" height="1" fill="#7a7a7a"/>
<rect x="76" y="215" width="1" height="1" fill="#7a7a7a"/>
<rect x="78" y="215" width="1" height="1" fill="#7a7a7a"/>
<rect x="61.5" y="227.5" width="8" height="8" fill="#fff" stroke="#7f7f7f"/>
<rect x="63" y="231" width="5" height="1" fill="#000"/>
<rect x="71" y="231" width="1" height="1" fill="#7a7a7a"/>
<rect x="73" y="231" width="1" height="1" fill="#7a7a7a"/>
<rect x="75" y="231" width="1" height="1" fill="#7a7a7a"/>
<rect x="77" y="231" width="1" height="1" fill="#7a7a7a"/>
<rect x="79" y="231" width="1" height="1" fill="#7a7a7a"/>
<rect x="93" y="247" width="1" height="1" fill="#7a7a7a"/>
<rect x="95" y="247" width="1" height="1" fill="#7a7a7a"/>
<rect x="97" y="247" width="1" height="1" fill="#7a7a7a"/>
<rect x="99" y="247" width="1" height="1" fill="#7a7a7a"/>
<rect x="101" y="247" width="1" height="1" fill="#7a7a7a"/>
<rect x="103" y="247" width="1" height="1" fill="#7a7a7a"/>
<rect x="105" y="247" width="1" height="1" fill="#7a7a7a"/>
<rect x="93" y="263" width="1" height="1" fill="#7a7a7a"/>
<rect x="95" y="263" width="1" height="1" fill="#7a7a7a"/>
<rect x="97" y="263" width="1" height="1" fill="#7a7a7a"/>
<rect x="99" y="263" width="1" height="1" fill="#7a7a7a"/>
<rect x="101" y="263" width="1" height="1" fill="#7a7a7a"/>
<rect x="103" y="263" width="1" height="1" fill="#7a7a7a"/>
<rect x="105" y="263" width="1" height="1" fill="#7a7a7a"/>
<rect x="34.5" y="275.5" width="8" height="8" fill="#fff" stroke="#7f7f7f"/>
<rect x="36" y="279" width="5" height="1" fill="#000"/>
<rect x="44" y="279" width="1" height="1" fill="#7a7a7a"/>
<rect x="46" y="279" width="1" height="1" fill="#7a7a7a"/>
<rect x="48" y="279" width="1" height="1" fill="#7a7a7a"/>
<rect x="50" y="279" width="1" height="1" fill="#7a7a7a"/>
<rect x="52" y="279" width="1" height="1" fill="#7a7a7a"/>
<rect x="66" y="295" width="1" height="1" fill="#7a7a7a"/>
<rect x="68" y="295" width="1" height="1" fill="#7a7a7a"/>
<rect x="70" y="295" width="1" height="1" fill="#7a7a7a"/>
<rect x="72" y="295" width="1" height="1" fill="#7a7a7a"/>
<rect x="74" y="295" width="1" height="1" fill="#7a7a7a"/>
<rect x="76" y="295" width="1" height="1" fill="#7a7a7a"/>
<rect x="78" y="295" width="1" height="1" fill="#7a7a7a"/>
<rect x="66" y="311" width="1" height="1" fill="#7a7a7a"/>
<rect x="68" y="311" width="1" height="1" fill="#7a7a7a"/>
<rect x="70" y="311" width="1" height="1" fill="#7a7a7a"/>
<rect x="72" y="311" width="1" height="1" fill="#7a7a7a"/>
<rect x="74" y="311" width="1" height="1" fill="#7a7a7a"/>
<rect x="76" y="311" width="1" height="1" fill="#7a7a7a"/>
<rect x="78" y="311" width="1" height="1" fill="#7a7a7a"/>
<rect x="61.5" y="323.5" width="8" height="8" fill="#fff" stroke="#7f7f7f"/>
<rect x="63" y="327" width="5" height="1" fill="#000"/>
<rect x="71" y="327" width="1" height="1" fill="#7a7a7a"/>
<rect x="73" y="327" width="1" height="1" fill="#7a7a7a"/>
<rect x="75" y="327" width="1" height="1" fill="#7a7a7a"/>
<rect x="77" y="327" width="1" height="1" fill="#7a7a7a"/>
<rect x="79" y="327" width="1" height="1" fill="#7a7a7a"/>
<rect x="93" y="343" width="1" height="1" fill="#7a7a7a"/>
<rect x="95" y="343" width="1" height="1" fill="#7a7a7a"/>
<rect x="97" y="343" width="1" height="1" fill="#7a7a7a"/>
<rect x="99" y="343" width="1" height="1" fill="#7a7a7a"/>
<rect x="101" y="343" width="1" height="1" fill="#7a7a7a"/>
<rect x="103" y="343" width="1" height="1" fill="#7a7a7a"/>
<rect x="105" y="343" width="1" height="1" fill="#7a7a7a"/>
<rect x="93" y="359" width="1" height="1" fill="#7a7a7a"/>
<rect x="95" y="359" width="1" height="1" fill="#7a7a7a"/>
<rect x="97" y="359" width="1" height="1" fill="#7a7a7a"/>
<rect x="99" y="359" width="1" height="1" fill="#7a7a7a"/>
<rect x="101" y="359" width="1" height="1" fill="#7a7a7a"/>
<rect x="103" y="359" width="1" height="1" fill="#7a7a7a"/>
<rect x="105" y="359" width="1" height="1" fill="#7a7a7a"/>
<rect x="1.5" y="458.5" width="8" height="8" fill="#fff" stroke="#7f7f7f"/>
<rect x="3" y="462" width="5" height="1" fill="#000"/>
<rect x="12" y="453" width="469" height="1" fill="#a0a0a0"/>
<rect x="134" y="472" width="346" height="17" fill="#e8e7e4"/>
<rect x="133" y="471" width="1" height="18" fill="#a0a0a0"/>
<rect x="12" y="471" width="469" height="1" fill="#a0a0a0"/>
<rect x="134" y="490" width="346" height="17" fill="#e8e7e4"/>
<rect x="133" y="489" width="1" height="18" fill="#a0a0a0"/>
<rect x="12" y="489" width="469" height="1" fill="#a0a0a0"/>
<rect x="1.5" y="512.5" width="8" height="8" fill="#fff" stroke="#7f7f7f"/>
<rect x="3" y="516" width="5" height="1" fill="#000"/>
<rect x="12" y="507" width="469" height="1" fill="#a0a0a0"/>
<rect x="133" y="525" width="1" height="18" fill="#a0a0a0"/>
<rect x="12" y="525" width="469" height="1" fill="#a0a0a0"/>
<rect x="133" y="543" width="1" height="18" fill="#a0a0a0"/>
<rect x="12" y="543" width="469" height="1" fill="#a0a0a0"/>
<rect x="133" y="561" width="1" height="18" fill="#a0a0a0"/>
<rect x="16.5" y="565.5" width="10" height="10" fill="#fff" stroke="#cfcfcf"/>
<rect x="12" y="561" width="469" height="1" fill="#a0a0a0"/>
<rect x="133" y="579" width="1" height="18" fill="#a0a0a0"/>
<rect x="12" y="579" width="469" height="1" fill="#a0a0a0"/>
<rect x="134" y="598" width="346" height="17" fill="#e8e7e4"/>
<rect x="133" y="597" width="1" height="18" fill="#a0a0a0"/>
<rect x="12" y="597" width="469" height="1" fill="#a0a0a0"/>
<rect x="133" y="615" width="1" height="18" fill="#a0a0a0"/>
<rect x="12" y="615" width="469" height="1" fill="#a0a0a0"/>
<rect x="1.5" y="638.5" width="8" height="8" fill="#fff" stroke="#7f7f7f"/>
<rect x="3" y="642" width="5" height="1" fill="#000"/>
<rect x="12" y="633" width="469" height="1" fill="#a0a0a0"/>
<rect x="134" y="652" width="346" height="17" fill="#e8e7e4"/>
<rect x="133" y="651" width="1" height="18" fill="#a0a0a0"/>
<rect x="16.5" y="655.5" width="10" height="10" fill="#fff" stroke="#cfcfcf"/>
<rect x="12" y="651" width="469" height="1" fill="#a0a0a0"/>
<rect x="134" y="670" width="346" height="17" fill="#e8e7e4"/>
<rect x="133" y="669" width="1" height="18" fill="#a0a0a0"/>
<rect x="16.5" y="673.5" width="10" height="10" fill="#fff" stroke="#cfcfcf"/>
<rect x="12" y="669" width="469" height="1" fill="#a0a0a0"/>
<rect x="134" y="688" width="346" height="17" fill="#e8e7e4"/>
<rect x="133" y="687" width="1" height="18" fill="#a0a0a0"/>
<rect x="16.5" y="691.5" width="10" height="10" fill="#fff" stroke="#cfcfcf"/>
<rect x="12" y="687" width="469" height="1" fill="#a0a0a0"/>
<rect x="134" y="706" width="346" height="17" fill="#e8e7e4"/>
<rect x="133" y="705" width="1" height="18" fill="#a0a0a0"/>
<rect x="12" y="705" width="469" height="1" fill="#a0a0a0"/>
<rect x="134" y="724" width="346" height="17" fill="#e8e7e4"/>
<rect x="133" y="723" width="1" height="18" fill="#a0a0a0"/>
<rect x="12" y="723" width="469" height="1" fill="#a0a0a0"/>
<rect x="1.5" y="746.5" width="8" height="8" fill="#fff" stroke="#7f7f7f"/>
<rect x="3" y="750" width="5" height="1" fill="#000"/>
<rect x="5" y="748" width="1" height="5" fill="#000"/>
<rect x="12" y="741" width="469" height="1" fill="#a0a0a0"/>
<rect x="12" y="759" width="469" height="1" fill="#a0a0a0"/>
<rect x="12" y="453" width="1" height="307" fill="#a0a0a0"/>
<rect x="480" y="453" width="1" height="307" fill="#a0a0a0"/>
<rect x="495" y="5" width="1" height="1" fill="#999"/>
<rect x="499" y="5" width="1" height="1" fill="#999"/>
<rect x="495" y="9" width="1" height="1" fill="#999"/>
<rect x="499" y="9" width="1" height="1" fill="#999"/>
<rect x="495" y="13" width="1" height="1" fill="#999"/>
<rect x="499" y="13" width="1" height="1" fill="#999"/>
<rect x="495" y="17" width="1" height="1" fill="#999"/>
<rect x="499" y="17" width="1" height="1" fill="#999"/>
<rect x="495" y="21" width="1" height="1" fill="#999"/>
<rect x="499" y="21" width="1" height="1" fill="#999"/>
<rect x="497" y="7" width="1" height="1" fill="#999"/>
<rect x="497" y="11" width="1" height="1" fill="#999"/>
<rect x="497" y="15" width="1" height="1" fill="#999"/>
<rect x="497" y="19" width="1" height="1" fill="#999"/>
<path d="M898.5 11.5h6.5l-3.25 3.25z" fill="#717171"/>
<g shape-rendering="crispEdges">
<rect x="500" y="151" width="16" height="153" fill="#000"/>
<rect x="501" y="154" width="14" height="15" fill="#ff0000"/>
<rect x="501" y="170" width="14" height="16" fill="#ffb400"/>
<rect x="501" y="187" width="14" height="16" fill="#ffff00"/>
<rect x="501" y="204" width="14" height="15" fill="#b4ff00"/>
<rect x="501" y="220" width="14" height="16" fill="#00e600"/>
<rect x="501" y="237" width="14" height="16" fill="#00ffb4"/>
<rect x="501" y="254" width="14" height="15" fill="#00ffff"/>
<rect x="501" y="270" width="14" height="16" fill="#00b4ff"/>
<rect x="501" y="287" width="14" height="14" fill="#0000ff"/>
</g>
<rect x="796" y="120.00" width="6" height="38.22" fill="#ff0000"/>
<rect x="796" y="158.22" width="6" height="38.22" fill="#ffb000"/>
<rect x="796" y="196.44" width="6" height="38.22" fill="#ffff00"/>
<rect x="796" y="234.67" width="6" height="38.22" fill="#a8ff00"/>
<rect x="796" y="272.89" width="6" height="38.22" fill="#00e600"/>
<rect x="796" y="311.11" width="6" height="38.22" fill="#00f0b0"/>
<rect x="796" y="349.33" width="6" height="38.22" fill="#00ffff"/>
<rect x="796" y="387.56" width="6" height="38.22" fill="#00b0ff"/>
<rect x="796" y="425.78" width="6" height="38.22" fill="#0000ff"/>
<rect x="797" y="119.00" width="3" height="2" fill="#000"/>
<rect x="797" y="157.22" width="3" height="2" fill="#000"/>
<rect x="797" y="195.44" width="3" height="2" fill="#000"/>
<rect x="797" y="233.67" width="3" height="2" fill="#000"/>
<rect x="797" y="271.89" width="3" height="2" fill="#000"/>
<rect x="797" y="310.11" width="3" height="2" fill="#000"/>
<rect x="797" y="348.33" width="3" height="2" fill="#000"/>
<rect x="797" y="386.56" width="3" height="2" fill="#000"/>
<rect x="797" y="424.78" width="3" height="2" fill="#000"/>
<rect x="797" y="463.00" width="3" height="2" fill="#000"/>
<rect x="797" y="118" width="3" height="3" fill="#000"/><rect x="797" y="462.5" width="3" height="2.5" fill="#000"/>
<rect x="1005" y="575" width="121" height="12" fill="#000"/>
<rect x="1104" y="576" width="22" height="10" fill="#fff"/>
<rect x="527" y="634" width="1" height="1" fill="#999"/>
<rect x="527" y="638" width="1" height="1" fill="#999"/>
<rect x="531" y="634" width="1" height="1" fill="#999"/>
<rect x="531" y="638" width="1" height="1" fill="#999"/>
<rect x="535" y="634" width="1" height="1" fill="#999"/>
<rect x="535" y="638" width="1" height="1" fill="#999"/>
<rect x="539" y="634" width="1" height="1" fill="#999"/>
<rect x="539" y="638" width="1" height="1" fill="#999"/>
<rect x="543" y="634" width="1" height="1" fill="#999"/>
<rect x="543" y="638" width="1" height="1" fill="#999"/>
<rect x="547" y="634" width="1" height="1" fill="#999"/>
<rect x="547" y="638" width="1" height="1" fill="#999"/>
<rect x="551" y="634" width="1" height="1" fill="#999"/>
<rect x="551" y="638" width="1" height="1" fill="#999"/>
<rect x="555" y="634" width="1" height="1" fill="#999"/>
<rect x="555" y="638" width="1" height="1" fill="#999"/>
<rect x="559" y="634" width="1" height="1" fill="#999"/>
<rect x="559" y="638" width="1" height="1" fill="#999"/>
<rect x="563" y="634" width="1" height="1" fill="#999"/>
<rect x="563" y="638" width="1" height="1" fill="#999"/>
<rect x="567" y="634" width="1" height="1" fill="#999"/>
<rect x="567" y="638" width="1" height="1" fill="#999"/>
<rect x="571" y="634" width="1" height="1" fill="#999"/>
<rect x="571" y="638" width="1" height="1" fill="#999"/>
<rect x="575" y="634" width="1" height="1" fill="#999"/>
<rect x="575" y="638" width="1" height="1" fill="#999"/>
<rect x="579" y="634" width="1" height="1" fill="#999"/>
<rect x="579" y="638" width="1" height="1" fill="#999"/>
<rect x="583" y="634" width="1" height="1" fill="#999"/>
<rect x="583" y="638" width="1" height="1" fill="#999"/>
<rect x="587" y="634" width="1" height="1" fill="#999"/>
<rect x="587" y="638" width="1" height="1" fill="#999"/>
<rect x="591" y="634" width="1" height="1" fill="#999"/>
<rect x="591" y="638" width="1" height="1" fill="#999"/>
<rect x="595" y="634" width="1" height="1" fill="#999"/>
<rect x="595" y="638" width="1" height="1" fill="#999"/>
<rect x="599" y="634" width="1" height="1" fill="#999"/>
<rect x="599" y="638" width="1" height="1" fill="#999"/>
<rect x="603" y="634" width="1" height="1" fill="#999"/>
<rect x="603" y="638" width="1" height="1" fill="#999"/>
<rect x="607" y="634" width="1" height="1" fill="#999"/>
<rect x="607" y="638" width="1" height="1" fill="#999"/>
<rect x="611" y="634" width="1" height="1" fill="#999"/>
<rect x="611" y="638" width="1" height="1" fill="#999"/>
<rect x="615" y="634" width="1" height="1" fill="#999"/>
<rect x="615" y="638" width="1" height="1" fill="#999"/>
<rect x="619" y="634" width="1" height="1" fill="#999"/>
<rect x="619" y="638" width="1" height="1" fill="#999"/>
<rect x="623" y="634" width="1" height="1" fill="#999"/>
<rect x="623" y="638" width="1" height="1" fill="#999"/>
<rect x="627" y="634" width="1" height="1" fill="#999"/>
<rect x="627" y="638" width="1" height="1" fill="#999"/>
<rect x="631" y="634" width="1" height="1" fill="#999"/>
<rect x="631" y="638" width="1" height="1" fill="#999"/>
<rect x="635" y="634" width="1" height="1" fill="#999"/>
<rect x="635" y="638" width="1" height="1" fill="#999"/>
<rect x="639" y="634" width="1" height="1" fill="#999"/>
<rect x="639" y="638" width="1" height="1" fill="#999"/>
<rect x="643" y="634" width="1" height="1" fill="#999"/>
<rect x="643" y="638" width="1" height="1" fill="#999"/>
<rect x="647" y="634" width="1" height="1" fill="#999"/>
<rect x="647" y="638" width="1" height="1" fill="#999"/>
<rect x="651" y="634" width="1" height="1" fill="#999"/>
<rect x="651" y="638" width="1" height="1" fill="#999"/>
<rect x="655" y="634" width="1" height="1" fill="#999"/>
<rect x="655" y="638" width="1" height="1" fill="#999"/>
<rect x="659" y="634" width="1" height="1" fill="#999"/>
<rect x="659" y="638" width="1" height="1" fill="#999"/>
<rect x="663" y="634" width="1" height="1" fill="#999"/>
<rect x="663" y="638" width="1" height="1" fill="#999"/>
<rect x="667" y="634" width="1" height="1" fill="#999"/>
<rect x="667" y="638" width="1" height="1" fill="#999"/>
<rect x="671" y="634" width="1" height="1" fill="#999"/>
<rect x="671" y="638" width="1" height="1" fill="#999"/>
<rect x="675" y="634" width="1" height="1" fill="#999"/>
<rect x="675" y="638" width="1" height="1" fill="#999"/>
<rect x="679" y="634" width="1" height="1" fill="#999"/>
<rect x="679" y="638" width="1" height="1" fill="#999"/>
<rect x="683" y="634" width="1" height="1" fill="#999"/>
<rect x="683" y="638" width="1" height="1" fill="#999"/>
<rect x="687" y="634" width="1" height="1" fill="#999"/>
<rect x="687" y="638" width="1" height="1" fill="#999"/>
<rect x="691" y="634" width="1" height="1" fill="#999"/>
<rect x="691" y="638" width="1" height="1" fill="#999"/>
<rect x="695" y="634" width="1" height="1" fill="#999"/>
<rect x="695" y="638" width="1" height="1" fill="#999"/>
<rect x="699" y="634" width="1" height="1" fill="#999"/>
<rect x="699" y="638" width="1" height="1" fill="#999"/>
<rect x="703" y="634" width="1" height="1" fill="#999"/>
<rect x="703" y="638" width="1" height="1" fill="#999"/>
<rect x="707" y="634" width="1" height="1" fill="#999"/>
<rect x="707" y="638" width="1" height="1" fill="#999"/>
<rect x="711" y="634" width="1" height="1" fill="#999"/>
<rect x="711" y="638" width="1" height="1" fill="#999"/>
<rect x="715" y="634" width="1" height="1" fill="#999"/>
<rect x="715" y="638" width="1" height="1" fill="#999"/>
<rect x="719" y="634" width="1" height="1" fill="#999"/>
<rect x="719" y="638" width="1" height="1" fill="#999"/>
<rect x="723" y="634" width="1" height="1" fill="#999"/>
<rect x="723" y="638" width="1" height="1" fill="#999"/>
<rect x="727" y="634" width="1" height="1" fill="#999"/>
<rect x="727" y="638" width="1" height="1" fill="#999"/>
<rect x="731" y="634" width="1" height="1" fill="#999"/>
<rect x="731" y="638" width="1" height="1" fill="#999"/>
<rect x="735" y="634" width="1" height="1" fill="#999"/>
<rect x="735" y="638" width="1" height="1" fill="#999"/>
<rect x="739" y="634" width="1" height="1" fill="#999"/>
<rect x="739" y="638" width="1" height="1" fill="#999"/>
<rect x="743" y="634" width="1" height="1" fill="#999"/>
<rect x="743" y="638" width="1" height="1" fill="#999"/>
<rect x="747" y="634" width="1" height="1" fill="#999"/>
<rect x="747" y="638" width="1" height="1" fill="#999"/>
<rect x="751" y="634" width="1" height="1" fill="#999"/>
<rect x="751" y="638" width="1" height="1" fill="#999"/>
<rect x="755" y="634" width="1" height="1" fill="#999"/>
<rect x="755" y="638" width="1" height="1" fill="#999"/>
<rect x="759" y="634" width="1" height="1" fill="#999"/>
<rect x="759" y="638" width="1" height="1" fill="#999"/>
<rect x="763" y="634" width="1" height="1" fill="#999"/>
<rect x="763" y="638" width="1" height="1" fill="#999"/>
<rect x="767" y="634" width="1" height="1" fill="#999"/>
<rect x="767" y="638" width="1" height="1" fill="#999"/>
<rect x="771" y="634" width="1" height="1" fill="#999"/>
<rect x="771" y="638" width="1" height="1" fill="#999"/>
<rect x="775" y="634" width="1" height="1" fill="#999"/>
<rect x="775" y="638" width="1" height="1" fill="#999"/>
<rect x="779" y="634" width="1" height="1" fill="#999"/>
<rect x="779" y="638" width="1" height="1" fill="#999"/>
<rect x="783" y="634" width="1" height="1" fill="#999"/>
<rect x="783" y="638" width="1" height="1" fill="#999"/>
<rect x="787" y="634" width="1" height="1" fill="#999"/>
<rect x="787" y="638" width="1" height="1" fill="#999"/>
<rect x="791" y="634" width="1" height="1" fill="#999"/>
<rect x="791" y="638" width="1" height="1" fill="#999"/>
<rect x="795" y="634" width="1" height="1" fill="#999"/>
<rect x="795" y="638" width="1" height="1" fill="#999"/>
<rect x="799" y="634" width="1" height="1" fill="#999"/>
<rect x="799" y="638" width="1" height="1" fill="#999"/>
<rect x="803" y="634" width="1" height="1" fill="#999"/>
<rect x="803" y="638" width="1" height="1" fill="#999"/>
<rect x="807" y="634" width="1" height="1" fill="#999"/>
<rect x="807" y="638" width="1" height="1" fill="#999"/>
<rect x="811" y="634" width="1" height="1" fill="#999"/>
<rect x="811" y="638" width="1" height="1" fill="#999"/>
<rect x="815" y="634" width="1" height="1" fill="#999"/>
<rect x="815" y="638" width="1" height="1" fill="#999"/>
<rect x="819" y="634" width="1" height="1" fill="#999"/>
<rect x="819" y="638" width="1" height="1" fill="#999"/>
<rect x="823" y="634" width="1" height="1" fill="#999"/>
<rect x="823" y="638" width="1" height="1" fill="#999"/>
<rect x="827" y="634" width="1" height="1" fill="#999"/>
<rect x="827" y="638" width="1" height="1" fill="#999"/>
<rect x="831" y="634" width="1" height="1" fill="#999"/>
<rect x="831" y="638" width="1" height="1" fill="#999"/>
<rect x="835" y="634" width="1" height="1" fill="#999"/>
<rect x="835" y="638" width="1" height="1" fill="#999"/>
<rect x="839" y="634" width="1" height="1" fill="#999"/>
<rect x="839" y="638" width="1" height="1" fill="#999"/>
<rect x="843" y="634" width="1" height="1" fill="#999"/>
<rect x="843" y="638" width="1" height="1" fill="#999"/>
<rect x="847" y="634" width="1" height="1" fill="#999"/>
<rect x="847" y="638" width="1" height="1" fill="#999"/>
<rect x="851" y="634" width="1" height="1" fill="#999"/>
<rect x="851" y="638" width="1" height="1" fill="#999"/>
<rect x="855" y="634" width="1" height="1" fill="#999"/>
<rect x="855" y="638" width="1" height="1" fill="#999"/>
<rect x="859" y="634" width="1" height="1" fill="#999"/>
<rect x="859" y="638" width="1" height="1" fill="#999"/>
<rect x="863" y="634" width="1" height="1" fill="#999"/>
<rect x="863" y="638" width="1" height="1" fill="#999"/>
<rect x="867" y="634" width="1" height="1" fill="#999"/>
<rect x="867" y="638" width="1" height="1" fill="#999"/>
<rect x="871" y="634" width="1" height="1" fill="#999"/>
<rect x="871" y="638" width="1" height="1" fill="#999"/>
<rect x="875" y="634" width="1" height="1" fill="#999"/>
<rect x="875" y="638" width="1" height="1" fill="#999"/>
<rect x="879" y="634" width="1" height="1" fill="#999"/>
<rect x="879" y="638" width="1" height="1" fill="#999"/>
<rect x="883" y="634" width="1" height="1" fill="#999"/>
<rect x="883" y="638" width="1" height="1" fill="#999"/>
<rect x="887" y="634" width="1" height="1" fill="#999"/>
<rect x="887" y="638" width="1" height="1" fill="#999"/>
<rect x="891" y="634" width="1" height="1" fill="#999"/>
<rect x="891" y="638" width="1" height="1" fill="#999"/>
<rect x="895" y="634" width="1" height="1" fill="#999"/>
<rect x="895" y="638" width="1" height="1" fill="#999"/>
<rect x="899" y="634" width="1" height="1" fill="#999"/>
<rect x="899" y="638" width="1" height="1" fill="#999"/>
<rect x="903" y="634" width="1" height="1" fill="#999"/>
<rect x="903" y="638" width="1" height="1" fill="#999"/>
<rect x="907" y="634" width="1" height="1" fill="#999"/>
<rect x="907" y="638" width="1" height="1" fill="#999"/>
<rect x="911" y="634" width="1" height="1" fill="#999"/>
<rect x="911" y="638" width="1" height="1" fill="#999"/>
<rect x="915" y="634" width="1" height="1" fill="#999"/>
<rect x="915" y="638" width="1" height="1" fill="#999"/>
<rect x="919" y="634" width="1" height="1" fill="#999"/>
<rect x="919" y="638" width="1" height="1" fill="#999"/>
<rect x="923" y="634" width="1" height="1" fill="#999"/>
<rect x="923" y="638" width="1" height="1" fill="#999"/>
<rect x="927" y="634" width="1" height="1" fill="#999"/>
<rect x="927" y="638" width="1" height="1" fill="#999"/>
<rect x="931" y="634" width="1" height="1" fill="#999"/>
<rect x="931" y="638" width="1" height="1" fill="#999"/>
<rect x="935" y="634" width="1" height="1" fill="#999"/>
<rect x="935" y="638" width="1" height="1" fill="#999"/>
<rect x="939" y="634" width="1" height="1" fill="#999"/>
<rect x="939" y="638" width="1" height="1" fill="#999"/>
<rect x="943" y="634" width="1" height="1" fill="#999"/>
<rect x="943" y="638" width="1" height="1" fill="#999"/>
<rect x="947" y="634" width="1" height="1" fill="#999"/>
<rect x="947" y="638" width="1" height="1" fill="#999"/>
<rect x="951" y="634" width="1" height="1" fill="#999"/>
<rect x="951" y="638" width="1" height="1" fill="#999"/>
<rect x="955" y="634" width="1" height="1" fill="#999"/>
<rect x="955" y="638" width="1" height="1" fill="#999"/>
<rect x="959" y="634" width="1" height="1" fill="#999"/>
<rect x="959" y="638" width="1" height="1" fill="#999"/>
<rect x="963" y="634" width="1" height="1" fill="#999"/>
<rect x="963" y="638" width="1" height="1" fill="#999"/>
<rect x="967" y="634" width="1" height="1" fill="#999"/>
<rect x="967" y="638" width="1" height="1" fill="#999"/>
<rect x="971" y="634" width="1" height="1" fill="#999"/>
<rect x="971" y="638" width="1" height="1" fill="#999"/>
<rect x="975" y="634" width="1" height="1" fill="#999"/>
<rect x="975" y="638" width="1" height="1" fill="#999"/>
<rect x="979" y="634" width="1" height="1" fill="#999"/>
<rect x="979" y="638" width="1" height="1" fill="#999"/>
<rect x="983" y="634" width="1" height="1" fill="#999"/>
<rect x="983" y="638" width="1" height="1" fill="#999"/>
<rect x="987" y="634" width="1" height="1" fill="#999"/>
<rect x="987" y="638" width="1" height="1" fill="#999"/>
<rect x="991" y="634" width="1" height="1" fill="#999"/>
<rect x="991" y="638" width="1" height="1" fill="#999"/>
<rect x="995" y="634" width="1" height="1" fill="#999"/>
<rect x="995" y="638" width="1" height="1" fill="#999"/>
<rect x="999" y="634" width="1" height="1" fill="#999"/>
<rect x="999" y="638" width="1" height="1" fill="#999"/>
<rect x="1003" y="634" width="1" height="1" fill="#999"/>
<rect x="1003" y="638" width="1" height="1" fill="#999"/>
<rect x="1007" y="634" width="1" height="1" fill="#999"/>
<rect x="1007" y="638" width="1" height="1" fill="#999"/>
<rect x="1011" y="634" width="1" height="1" fill="#999"/>
<rect x="1011" y="638" width="1" height="1" fill="#999"/>
<rect x="1015" y="634" width="1" height="1" fill="#999"/>
<rect x="1015" y="638" width="1" height="1" fill="#999"/>
<rect x="1019" y="634" width="1" height="1" fill="#999"/>
<rect x="1019" y="638" width="1" height="1" fill="#999"/>
<rect x="1023" y="634" width="1" height="1" fill="#999"/>
<rect x="1023" y="638" width="1" height="1" fill="#999"/>
<rect x="1027" y="634" width="1" height="1" fill="#999"/>
<rect x="1027" y="638" width="1" height="1" fill="#999"/>
<rect x="1031" y="634" width="1" height="1" fill="#999"/>
<rect x="1031" y="638" width="1" height="1" fill="#999"/>
<rect x="1035" y="634" width="1" height="1" fill="#999"/>
<rect x="1035" y="638" width="1" height="1" fill="#999"/>
<rect x="1039" y="634" width="1" height="1" fill="#999"/>
<rect x="1039" y="638" width="1" height="1" fill="#999"/>
<rect x="1043" y="634" width="1" height="1" fill="#999"/>
<rect x="1043" y="638" width="1" height="1" fill="#999"/>
<rect x="1047" y="634" width="1" height="1" fill="#999"/>
<rect x="1047" y="638" width="1" height="1" fill="#999"/>
<rect x="529" y="636" width="1" height="1" fill="#999"/>
<rect x="533" y="636" width="1" height="1" fill="#999"/>
<rect x="537" y="636" width="1" height="1" fill="#999"/>
<rect x="541" y="636" width="1" height="1" fill="#999"/>
<rect x="545" y="636" width="1" height="1" fill="#999"/>
<rect x="549" y="636" width="1" height="1" fill="#999"/>
<rect x="553" y="636" width="1" height="1" fill="#999"/>
<rect x="557" y="636" width="1" height="1" fill="#999"/>
<rect x="561" y="636" width="1" height="1" fill="#999"/>
<rect x="565" y="636" width="1" height="1" fill="#999"/>
<rect x="569" y="636" width="1" height="1" fill="#999"/>
<rect x="573" y="636" width="1" height="1" fill="#999"/>
<rect x="577" y="636" width="1" height="1" fill="#999"/>
<rect x="581" y="636" width="1" height="1" fill="#999"/>
<rect x="585" y="636" width="1" height="1" fill="#999"/>
<rect x="589" y="636" width="1" height="1" fill="#999"/>
<rect x="593" y="636" width="1" height="1" fill="#999"/>
<rect x="597" y="636" width="1" height="1" fill="#999"/>
<rect x="601" y="636" width="1" height="1" fill="#999"/>
<rect x="605" y="636" width="1" height="1" fill="#999"/>
<rect x="609" y="636" width="1" height="1" fill="#999"/>
<rect x="613" y="636" width="1" height="1" fill="#999"/>
<rect x="617" y="636" width="1" height="1" fill="#999"/>
<rect x="621" y="636" width="1" height="1" fill="#999"/>
<rect x="625" y="636" width="1" height="1" fill="#999"/>
<rect x="629" y="636" width="1" height="1" fill="#999"/>
<rect x="633" y="636" width="1" height="1" fill="#999"/>
<rect x="637" y="636" width="1" height="1" fill="#999"/>
<rect x="641" y="636" width="1" height="1" fill="#999"/>
<rect x="645" y="636" width="1" height="1" fill="#999"/>
<rect x="649" y="636" width="1" height="1" fill="#999"/>
<rect x="653" y="636" width="1" height="1" fill="#999"/>
<rect x="657" y="636" width="1" height="1" fill="#999"/>
<rect x="661" y="636" width="1" height="1" fill="#999"/>
<rect x="665" y="636" width="1" height="1" fill="#999"/>
<rect x="669" y="636" width="1" height="1" fill="#999"/>
<rect x="673" y="636" width="1" height="1" fill="#999"/>
<rect x="677" y="636" width="1" height="1" fill="#999"/>
<rect x="681" y="636" width="1" height="1" fill="#999"/>
<rect x="685" y="636" width="1" height="1" fill="#999"/>
<rect x="689" y="636" width="1" height="1" fill="#999"/>
<rect x="693" y="636" width="1" height="1" fill="#999"/>
<rect x="697" y="636" width="1" height="1" fill="#999"/>
<rect x="701" y="636" width="1" height="1" fill="#999"/>
<rect x="705" y="636" width="1" height="1" fill="#999"/>
<rect x="709" y="636" width="1" height="1" fill="#999"/>
<rect x="713" y="636" width="1" height="1" fill="#999"/>
<rect x="717" y="636" width="1" height="1" fill="#999"/>
<rect x="721" y="636" width="1" height="1" fill="#999"/>
<rect x="725" y="636" width="1" height="1" fill="#999"/>
<rect x="729" y="636" width="1" height="1" fill="#999"/>
<rect x="733" y="636" width="1" height="1" fill="#999"/>
<rect x="737" y="636" width="1" height="1" fill="#999"/>
<rect x="741" y="636" width="1" height="1" fill="#999"/>
<rect x="745" y="636" width="1" height="1" fill="#999"/>
<rect x="749" y="636" width="1" height="1" fill="#999"/>
<rect x="753" y="636" width="1" height="1" fill="#999"/>
<rect x="757" y="636" width="1" height="1" fill="#999"/>
<rect x="761" y="636" width="1" height="1" fill="#999"/>
<rect x="765" y="636" width="1" height="1" fill="#999"/>
<rect x="769" y="636" width="1" height="1" fill="#999"/>
<rect x="773" y="636" width="1" height="1" fill="#999"/>
<rect x="777" y="636" width="1" height="1" fill="#999"/>
<rect x="781" y="636" width="1" height="1" fill="#999"/>
<rect x="785" y="636" width="1" height="1" fill="#999"/>
<rect x="789" y="636" width="1" height="1" fill="#999"/>
<rect x="793" y="636" width="1" height="1" fill="#999"/>
<rect x="797" y="636" width="1" height="1" fill="#999"/>
<rect x="801" y="636" width="1" height="1" fill="#999"/>
<rect x="805" y="636" width="1" height="1" fill="#999"/>
<rect x="809" y="636" width="1" height="1" fill="#999"/>
<rect x="813" y="636" width="1" height="1" fill="#999"/>
<rect x="817" y="636" width="1" height="1" fill="#999"/>
<rect x="821" y="636" width="1" height="1" fill="#999"/>
<rect x="825" y="636" width="1" height="1" fill="#999"/>
<rect x="829" y="636" width="1" height="1" fill="#999"/>
<rect x="833" y="636" width="1" height="1" fill="#999"/>
<rect x="837" y="636" width="1" height="1" fill="#999"/>
<rect x="841" y="636" width="1" height="1" fill="#999"/>
<rect x="845" y="636" width="1" height="1" fill="#999"/>
<rect x="849" y="636" width="1" height="1" fill="#999"/>
<rect x="853" y="636" width="1" height="1" fill="#999"/>
<rect x="857" y="636" width="1" height="1" fill="#999"/>
<rect x="861" y="636" width="1" height="1" fill="#999"/>
<rect x="865" y="636" width="1" height="1" fill="#999"/>
<rect x="869" y="636" width="1" height="1" fill="#999"/>
<rect x="873" y="636" width="1" height="1" fill="#999"/>
<rect x="877" y="636" width="1" height="1" fill="#999"/>
<rect x="881" y="636" width="1" height="1" fill="#999"/>
<rect x="885" y="636" width="1" height="1" fill="#999"/>
<rect x="889" y="636" width="1" height="1" fill="#999"/>
<rect x="893" y="636" width="1" height="1" fill="#999"/>
<rect x="897" y="636" width="1" height="1" fill="#999"/>
<rect x="901" y="636" width="1" height="1" fill="#999"/>
<rect x="905" y="636" width="1" height="1" fill="#999"/>
<rect x="909" y="636" width="1" height="1" fill="#999"/>
<rect x="913" y="636" width="1" height="1" fill="#999"/>
<rect x="917" y="636" width="1" height="1" fill="#999"/>
<rect x="921" y="636" width="1" height="1" fill="#999"/>
<rect x="925" y="636" width="1" height="1" fill="#999"/>
<rect x="929" y="636" width="1" height="1" fill="#999"/>
<rect x="933" y="636" width="1" height="1" fill="#999"/>
<rect x="937" y="636" width="1" height="1" fill="#999"/>
<rect x="941" y="636" width="1" height="1" fill="#999"/>
<rect x="945" y="636" width="1" height="1" fill="#999"/>
<rect x="949" y="636" width="1" height="1" fill="#999"/>
<rect x="953" y="636" width="1" height="1" fill="#999"/>
<rect x="957" y="636" width="1" height="1" fill="#999"/>
<rect x="961" y="636" width="1" height="1" fill="#999"/>
<rect x="965" y="636" width="1" height="1" fill="#999"/>
<rect x="969" y="636" width="1" height="1" fill="#999"/>
<rect x="973" y="636" width="1" height="1" fill="#999"/>
<rect x="977" y="636" width="1" height="1" fill="#999"/>
<rect x="981" y="636" width="1" height="1" fill="#999"/>
<rect x="985" y="636" width="1" height="1" fill="#999"/>
<rect x="989" y="636" width="1" height="1" fill="#999"/>
<rect x="993" y="636" width="1" height="1" fill="#999"/>
<rect x="997" y="636" width="1" height="1" fill="#999"/>
<rect x="1001" y="636" width="1" height="1" fill="#999"/>
<rect x="1005" y="636" width="1" height="1" fill="#999"/>
<rect x="1009" y="636" width="1" height="1" fill="#999"/>
<rect x="1013" y="636" width="1" height="1" fill="#999"/>
<rect x="1017" y="636" width="1" height="1" fill="#999"/>
<rect x="1021" y="636" width="1" height="1" fill="#999"/>
<rect x="1025" y="636" width="1" height="1" fill="#999"/>
<rect x="1029" y="636" width="1" height="1" fill="#999"/>
<rect x="1033" y="636" width="1" height="1" fill="#999"/>
<rect x="1037" y="636" width="1" height="1" fill="#999"/>
<rect x="1041" y="636" width="1" height="1" fill="#999"/>
<rect x="1045" y="636" width="1" height="1" fill="#999"/>
<rect x="1049" y="636" width="1" height="1" fill="#999"/>
<path d="M1054.0 635h8.8l-4.4 5z" fill="#1e1e1e"/>
<g fill="#1e1e1e" shape-rendering="crispEdges"><rect x="1072" y="631" width="1" height="7"/><rect x="1075" y="631" width="2" height="7"/><rect x="1072" y="631" width="5" height="1"/><rect x="1070" y="638" width="9" height="1"/><rect x="1074" y="639" width="1" height="3.5"/></g>
<rect x="1085.5" y="632.5" width="10" height="9" fill="none" stroke="#1e1e1e"/><rect x="1085.0" y="632" width="11" height="2" fill="#1e1e1e"/>
<path d="M1102.5 632.2l8.3 8.3M1110.8 632.2l-8.3 8.3" stroke="#1e1e1e" stroke-width="1.3"/>
<rect x="495" y="652" width="1" height="1" fill="#999"/>
<rect x="499" y="652" width="1" height="1" fill="#999"/>
<rect x="495" y="656" width="1" height="1" fill="#999"/>
<rect x="499" y="656" width="1" height="1" fill="#999"/>
<rect x="495" y="660" width="1" height="1" fill="#999"/>
<rect x="499" y="660" width="1" height="1" fill="#999"/>
<rect x="495" y="664" width="1" height="1" fill="#999"/>
<rect x="499" y="664" width="1" height="1" fill="#999"/>
<rect x="495" y="668" width="1" height="1" fill="#999"/>
<rect x="499" y="668" width="1" height="1" fill="#999"/>
<rect x="497" y="654" width="1" height="1" fill="#999"/>
<rect x="497" y="658" width="1" height="1" fill="#999"/>
<rect x="497" y="662" width="1" height="1" fill="#999"/>
<rect x="497" y="666" width="1" height="1" fill="#999"/>
<path d="M803 659h7.5l-3.75 3.75z" fill="#717171"/>
<path d="M903 659h7.5l-3.75 3.75z" fill="#717171"/>
<rect x="1125" y="664" width="1" height="1" fill="#333"/>
<g shape-rendering="crispEdges">
<rect x="536" y="698" width="561" height="1" fill="#a0a0a0"/>
<rect x="536" y="795" width="561" height="1" fill="#a0a0a0"/>
<rect x="536" y="698" width="1" height="98" fill="#a0a0a0"/>
<rect x="1096" y="698" width="1" height="98" fill="#a0a0a0"/>
<rect x="528" y="698" width="8" height="1" fill="#a0a0a0"/>
<rect x="528" y="708" width="8" height="1" fill="#a0a0a0"/>
<rect x="528" y="718" width="8" height="1" fill="#a0a0a0"/>
<rect x="528" y="728" width="8" height="1" fill="#a0a0a0"/>
<rect x="528" y="737" width="8" height="1" fill="#a0a0a0"/>
<rect x="528" y="747" width="8" height="1" fill="#a0a0a0"/>
<rect x="528" y="757" width="8" height="1" fill="#a0a0a0"/>
<rect x="528" y="766" width="8" height="1" fill="#a0a0a0"/>
<rect x="528" y="776" width="8" height="1" fill="#a0a0a0"/>
<rect x="528" y="786" width="8" height="1" fill="#a0a0a0"/>
<rect x="528" y="795" width="8" height="1" fill="#a0a0a0"/>
<rect x="536" y="795" width="1" height="8" fill="#a0a0a0"/>
<rect x="592" y="795" width="1" height="8" fill="#a0a0a0"/>
<rect x="648" y="795" width="1" height="8" fill="#a0a0a0"/>
<rect x="704" y="795" width="1" height="8" fill="#a0a0a0"/>
<rect x="760" y="795" width="1" height="8" fill="#a0a0a0"/>
<rect x="816" y="795" width="1" height="8" fill="#a0a0a0"/>
<rect x="872" y="795" width="1" height="8" fill="#a0a0a0"/>
<rect x="928" y="795" width="1" height="8" fill="#a0a0a0"/>
<rect x="984" y="795" width="1" height="8" fill="#a0a0a0"/>
<rect x="1040" y="795" width="1" height="8" fill="#a0a0a0"/>
<rect x="1096" y="795" width="1" height="8" fill="#a0a0a0"/>
<rect x="535" y="697" width="3" height="3" fill="#1a8a1a"/>
<rect x="535" y="745" width="3" height="3" fill="#1010d0"/>
<rect x="535" y="794" width="3" height="3" fill="#c02020"/>
<rect x="536.5" y="837.5" width="559" height="14" fill="none" stroke="#a0a0a0"/>
</g>
<rect x="9.5" y="48.5" width="12" height="13" fill="#fff" stroke="#3c3c3c"/>
<rect x="12.5" y="48.5" width="9" height="13" fill="#d6a214" stroke="#3c3c3c"/>
<path d="M10 50l1.5 1.5-1.5 1.5 1.5 1.5-1.5 1.5 1.5 1.5-1.5 1.5" fill="none" stroke="#a0a0a0" stroke-width="0.8"/>
<path d="M36.5 68.5v-3.5h5l1 1h5.5v2.5" fill="#dca80c" stroke="#3c3c3c"/>
<path d="M35.5 68.5h13l-0.8 9h-11.4z" fill="#fbf1a5" stroke="#3c3c3c"/>
<path d="M39 71.5l3-1.5 3 1.5v3.5l-3 1.5-3-1.5z" fill="#8fb8f0" stroke="#3c3c3c" stroke-width="0.8"/>
<path d="M52.7 91.3L54.2 90.3L55.8 92.4L60.6 86.8L61.3 87.6L56.1 95z" fill="#008c00"/>
<path d="M62.5 83.4L67.2 81.8L75.5 84.4V89.6L70.8 91.4L62.5 88Z" fill="#bcd9fb"/>
<path d="M70.8 86.2L75.5 84.4V89.6L70.8 91.4Z" fill="#5aa2f2"/>
<path d="M62.5 83.4L67.2 81.8L75.5 84.4L70.8 86.2Z" fill="#b4d4fa"/>
<path d="M62.5 83.4L67.2 81.8L75.5 84.4V89.6L70.8 91.4L62.5 88ZM62.5 83.4L70.8 86.2L75.5 84.4M70.8 86.2V91.4M66.5 84.8V89.6M66.5 84.8L71.2 83.1" fill="none" stroke="#333" stroke-width="1.15" stroke-linejoin="round"/>
<path d="M52.7 107.3L54.2 106.3L55.8 108.4L60.6 102.8L61.3 103.6L56.1 111z" fill="#008c00"/>
<path d="M63.5 100.5v-3.5h5l1 1h5.5v2.5" fill="#dca80c" stroke="#3c3c3c"/>
<path d="M62.5 100.5h13l-0.8 9h-11.4z" fill="#fbf1a5" stroke="#3c3c3c"/>
<path d="M68 101l6 5-2 2.5-6-5z" fill="#f2b48a" stroke="#555" stroke-width="0.7" stroke-dasharray="1 0.6"/>
<path d="M52.7 123.3L54.2 122.3L55.8 124.4L60.6 118.8L61.3 119.6L56.1 127z" fill="#008c00"/>
<path d="M64.5 113.5l9-1.5v3l-3 0.5v7l3-0.5v3l-9 1.5v-3l3-0.5v-7l-3 0.5z" fill="#e8c020" stroke="#3c3c3c" stroke-width="0.9"/>
<path d="M52.7 139.3L54.2 138.3L55.8 140.4L60.6 134.8L61.3 135.6L56.1 143z" fill="#008c00"/>
<path d="M69 136V130.5" stroke="#30e030" stroke-width="2"/><path d="M66.6 131.2L69 128.2L71.4 131.2z" fill="#30e030"/>
<path d="M69.5 136.5l4.5 3" stroke="#ff1a1a" stroke-width="1.8"/><path d="M72 141L75.8 140.8L74 137.6z" fill="#ff1a1a"/>
<path d="M68.5 136.5l-4.5 3" stroke="#4a90f0" stroke-width="1.8"/><path d="M66 141L62.2 140.8L64 137.6z" fill="#4a90f0"/>
<path d="M63.3 131l3.5 3M74.7 131l-3.5 3" stroke="#444" stroke-width="1.5"/><path d="M65.5 134.8h2.5v-2.3zM72.5 134.8h-2.5v-2.3z" fill="#333"/>
<rect x="68" y="138" width="2" height="3.8" fill="#888"/><rect x="68" y="135" width="2" height="2" fill="#111"/>
<path d="M52.7 155.3L54.2 154.3L55.8 156.4L60.6 150.8L61.3 151.6L56.1 159z" fill="#008c00"/>
<path d="M62.5 147.9L67.2 146.3L75.5 148.9V154.1L70.8 155.9L62.5 152.5Z" fill="#c8e0fb"/>
<path d="M70.8 150.7L75.5 148.9V154.1L70.8 155.9Z" fill="#c8e0fb"/>
<path d="M62.5 147.9L67.2 146.3L75.5 148.9L70.8 150.7Z" fill="#b8d6fa"/>
<path d="M62.5 147.9L67.2 146.3L75.5 148.9V154.1L70.8 155.9L62.5 152.5ZM62.5 147.9L70.8 150.7L75.5 148.9M70.8 150.7V155.9M66.5 149.3V154.1M66.5 149.3L71.2 147.6" fill="none" stroke="#333" stroke-width="1.15" stroke-linejoin="round"/>
<path d="M52.7 171.3L54.2 170.3L55.8 172.4L60.6 166.8L61.3 167.6L56.1 175z" fill="#008c00"/>
<rect x="62" y="160" width="14" height="14" fill="#76cf2e"/>
<path d="M63.2 165.5h11.6M66.6 166l-1.9 3.6M69.6 166l-1.9 3.6M72.6 166l-1.9 3.6" stroke="#fff" stroke-width="1.25"/>
<path d="M79.7 187.3L81.2 186.3L82.8 188.4L87.6 182.8L88.3 183.6L83.1 191z" fill="#008c00"/>
<rect x="90.5" y="178.5" width="12" height="9" fill="none" stroke="#3c3c3c"/><path d="M94.5 178.5v9M98.5 178.5v9" stroke="#3c3c3c"/>
<path d="M90.5 185Q96.5 177.5 102.5 185" fill="none" stroke="#10e010" stroke-width="1.2"/>
<path d="M89.5 176.5h3M93.5 176.5h3M97.5 176.5h3M91 176.5v2M95 176.5v2M99 176.5v2" stroke="#1010ff" stroke-width="1"/>
<path d="M89.5 189.5h3M95 189.5h3M100.5 189.5h3M91 188v1.5M96.5 188v1.5M102 188v1.5" stroke="#ff1010" stroke-width="1"/>
<path d="M79.7 203.3L81.2 202.3L82.8 204.4L87.6 198.8L88.3 199.6L83.1 207z" fill="#008c00"/>
<path d="M94 193.2L99 195.6V200L94 202.5L89.5 200V195.6Z" fill="#fff"/>
<path d="M94 198L99 195.6V200L94 202.5Z" fill="#1e90f0"/>
<path d="M94 193.2L99 195.6V200L94 202.5L89.5 200V195.6ZM89.5 195.6L94 198L99 195.6M94 198V202.5" fill="none" stroke="#3c3c3c" stroke-width="1.1" stroke-linejoin="round"/>
<path d="M94.5 205l3-3M97.5 205l3-3" stroke="#d4a020" stroke-width="1.3"/>
<path d="M79.7 219.3L81.2 218.3L82.8 220.4L87.6 214.8L88.3 215.6L83.1 223z" fill="#008c00"/>
<path d="M94 209.2L99 211.6V216L94 218.5L89.5 216V211.6Z" fill="#fff"/>
<path d="M94 214L99 211.6V216L94 218.5Z" fill="#10e010"/>
<path d="M94 209.2L99 211.6V216L94 218.5L89.5 216V211.6ZM89.5 211.6L94 214L99 211.6M94 214V218.5" fill="none" stroke="#3c3c3c" stroke-width="1.1" stroke-linejoin="round"/>
<path d="M101 218l-5 3" stroke="#d4a020" stroke-width="1.2"/><path d="M95 222l1-3 2 2z" fill="#d4a020"/>
<path d="M79.7 235.3L81.2 234.3L82.8 236.4L87.6 230.8L88.3 231.6L83.1 239z" fill="#008c00"/>
<path d="M90.5 228.5v-3.5h5l1 1h5.5v2.5" fill="#dca80c" stroke="#3c3c3c"/>
<path d="M89.5 228.5h13l-0.8 9h-11.4z" fill="#fbf1a5" stroke="#3c3c3c"/>
<defs><linearGradient id="rb92.5229.5" x1="0" x2="1"><stop offset="0" stop-color="#1030ff"/><stop offset="0.3" stop-color="#00e0ff"/><stop offset="0.55" stop-color="#20e020"/><stop offset="0.8" stop-color="#ffff00"/><stop offset="1" stop-color="#ff2000"/></linearGradient></defs>
<rect x="92.5" y="229.5" width="7.5" height="5.5" rx="2" fill="url(#rb92.5229.5)" stroke="#555" stroke-width="0.7"/>
<path d="M106.7 251.3L108.2 250.3L109.8 252.4L114.6 246.8L115.3 247.6L110.1 255z" fill="#008c00"/>
<path d="M117.5 244.5v-3.5h5l1 1h5.5v2.5" fill="#dca80c" stroke="#3c3c3c"/>
<path d="M116.5 244.5h13l-0.8 9h-11.4z" fill="#fbf1a5" stroke="#3c3c3c"/>
<g fill="#3a8af0"><rect x="122" y="245" width="2" height="1.3"/><rect x="122" y="247" width="2" height="4.5"/><rect x="120.5" y="251" width="5" height="1.2"/><rect x="121" y="247" width="1" height="1"/></g>
<path d="M106.7 267.3L108.2 266.3L109.8 268.4L114.6 262.8L115.3 263.6L110.1 271z" fill="#008c00"/>
<defs><linearGradient id="td116256" x1="0" x2="1"><stop offset="0" stop-color="#1030ff"/><stop offset="0.28" stop-color="#00f0f0"/><stop offset="0.55" stop-color="#30e010"/><stop offset="0.78" stop-color="#ffff00"/><stop offset="1" stop-color="#ff1000"/></linearGradient></defs>
<path d="M116.5 259.5L121.5 257.5L129.5 260V266.5L124.5 268L116.5 265Z" fill="url(#td116256)" stroke="#333" stroke-width="1.1" stroke-linejoin="round"/>
<path d="M116.5 259.5L124.5 262L129.5 260M124.5 262V268M120.5 260.8V266.4M121 260.7L125.5 258.8" fill="none" stroke="#333" stroke-width="1"/>
<path d="M56 275.8h5l-4.2 4.9 3.2 0.2-5.5 6.1 1.1-4.5-2.6-0.2z" fill="#ffe600"/>
<path d="M61 275.8l-4.2 4.9M60 280.9l-5.5 6.1M53 282.3l2.6 0.2" fill="none" stroke="#c0a000" stroke-width="0.9"/>
<rect x="62" y="272" width="14" height="14" fill="#76cf2e"/>
<path d="M68.5 273V276L70.5 278.8L68.5 281.9V284.8" fill="none" stroke="#fff" stroke-width="1.25"/>
<path d="M79.7 299.3L81.2 298.3L82.8 300.4L87.6 294.8L88.3 295.6L83.1 303z" fill="#008c00"/>
<path d="M89.5 291.5h11" stroke="#d4a020" stroke-width="1.2"/><path d="M99.5 289l3.5 2.5-3.5 2.5z" fill="#d4a020"/>
<path d="M79.7 315.3L81.2 314.3L82.8 316.4L87.6 310.8L88.3 311.6L83.1 319z" fill="#008c00"/>
<rect x="90.5" y="306.5" width="12" height="9" fill="none" stroke="#3c3c3c"/><path d="M94.5 306.5v9M98.5 306.5v9" stroke="#3c3c3c"/>
<path d="M90.5 313Q96.5 305.5 102.5 313" fill="none" stroke="#10e010" stroke-width="1.2"/>
<path d="M89.5 304.5h3M93.5 304.5h3M97.5 304.5h3M91 304.5v2M95 304.5v2M99 304.5v2" stroke="#1010ff" stroke-width="1"/>
<path d="M89.5 317.5h3M95 317.5h3M100.5 317.5h3M91 316v1.5M96.5 316v1.5M102 316v1.5" stroke="#ff1010" stroke-width="1"/>
<path d="M83 323.8h5l-4.2 4.9 3.2 0.2-5.5 6.1 1.1-4.5-2.6-0.2z" fill="#ff1a1a"/>
<path d="M88 323.8l-4.2 4.9M87 328.9l-5.5 6.1M80 330.3l2.6 0.2" fill="none" stroke="#c0a000" stroke-width="0.9"/>
<path d="M90.5 324.5v-3.5h5l1 1h5.5v2.5" fill="#dca80c" stroke="#3c3c3c"/>
<path d="M89.5 324.5h13l-0.8 9h-11.4z" fill="#fbf1a5" stroke="#3c3c3c"/>
<defs><linearGradient id="rb92.5325.5" x1="0" x2="1"><stop offset="0" stop-color="#1030ff"/><stop offset="0.3" stop-color="#00e0ff"/><stop offset="0.55" stop-color="#20e020"/><stop offset="0.8" stop-color="#ffff00"/><stop offset="1" stop-color="#ff2000"/></linearGradient></defs>
<rect x="92.5" y="325.5" width="7.5" height="5.5" rx="2" fill="url(#rb92.5325.5)" stroke="#555" stroke-width="0.7"/>
<path d="M110 339.8h5l-4.2 4.9 3.2 0.2-5.5 6.1 1.1-4.5-2.6-0.2z" fill="#ff1a1a"/>
<path d="M115 339.8l-4.2 4.9M114 344.9l-5.5 6.1M107 346.3l2.6 0.2" fill="none" stroke="#c0a000" stroke-width="0.9"/>
<path d="M117.5 340.5v-3.5h5l1 1h5.5v2.5" fill="#dca80c" stroke="#3c3c3c"/>
<path d="M116.5 340.5h13l-0.8 9h-11.4z" fill="#fbf1a5" stroke="#3c3c3c"/>
<g fill="#3a8af0"><rect x="122" y="341" width="2" height="1.3"/><rect x="122" y="343" width="2" height="4.5"/><rect x="120.5" y="347" width="5" height="1.2"/><rect x="121" y="343" width="1" height="1"/></g>
<path d="M110 355.8h5l-4.2 4.9 3.2 0.2-5.5 6.1 1.1-4.5-2.6-0.2z" fill="#ff1a1a"/>
<path d="M115 355.8l-4.2 4.9M114 360.9l-5.5 6.1M107 362.3l2.6 0.2" fill="none" stroke="#c0a000" stroke-width="0.9"/>
<defs><linearGradient id="td116352" x1="0" x2="1"><stop offset="0" stop-color="#1030ff"/><stop offset="0.28" stop-color="#00f0f0"/><stop offset="0.55" stop-color="#30e010"/><stop offset="0.78" stop-color="#ffff00"/><stop offset="1" stop-color="#ff1000"/></linearGradient></defs>
<path d="M116.5 355.5L121.5 353.5L129.5 356V362.5L124.5 364L116.5 361Z" fill="url(#td116352)" stroke="#333" stroke-width="1.1" stroke-linejoin="round"/>
<path d="M116.5 355.5L124.5 358L129.5 356M124.5 358V364M120.5 356.8V362.4M121 356.7L125.5 354.8" fill="none" stroke="#333" stroke-width="1"/>
<circle cx="517" cy="11.8" r="5.2" fill="none" stroke="#333" stroke-width="1.6"/><path d="M520.8 15.600000000000001l4 4" stroke="#333" stroke-width="1.8"/>
<path d="M514 12l3-3v2h3v2h-3v2z" fill="#d4a017"/>
<circle cx="539" cy="11.8" r="5.2" fill="none" stroke="#7a7a7a" stroke-width="1.6"/><path d="M542.8 15.600000000000001l4 4" stroke="#7a7a7a" stroke-width="1.8"/>
<path d="M542 12l-3-3v2h-3v2h3v2z" fill="#c8c8c8"/>
<path d="M568 6.0l6 3v7l-6 3-6-3v-7z" fill="#a8a8a8" stroke="#333" stroke-width="1.2"/>
<path d="M562 9.0l6 3v7l-6-3z" fill="#6e6e6e"/>
<path d="M562 9.0l6-3 6 3-6 3z" fill="#cfcfcf"/>
<path d="M568 6.0l6 3v7l-6 3-6-3v-7zM562 9.0l6 3 6-3M568 12.0v7" fill="none" stroke="#333" stroke-width="1.2" stroke-linejoin="round"/>
<path d="M590 7.0l6 3v7l-6 3-6-3v-7z" fill="#b4b4b4" />
<path d="M584 10.0l6 3v7l-6-3z" fill="#858585"/>
<path d="M584 10.0l6-3 6 3-6 3z" fill="#d4d4d4"/>
<path d="M611.8 6.6h3.8l3.3 3.1v3h-4.2l-2.9-3.1z" fill="#fff" stroke="#222" stroke-width="1.3" stroke-linejoin="round"/><rect x="614.9" y="9.6" width="3.9" height="3.1" fill="#fff" stroke="#222" stroke-width="1.2"/>
<path d="M605.6 12.4h3.8l3.3 3.1v3h-4.2l-2.9-3.1z" fill="#e8b010" stroke="#222" stroke-width="1.3" stroke-linejoin="round"/><rect x="608.7" y="15.4" width="3.9" height="3.1" fill="#f0b800" stroke="#222" stroke-width="1.2"/>
<path d="M606.5 10.5l1.8-3.2M616 18.2l1.8-3.3" stroke="#333" stroke-width="1.1"/><path d="M607.5 7l1.8-0.5 0 1.8zM617 17.5l-1.8 0.5 0-1.8z" fill="#333"/>
<rect x="633.5" y="6.5" width="5" height="5" fill="none" stroke="#6e6e6e" stroke-width="1.3"/><rect x="640.5" y="13.5" width="6" height="6" fill="none" stroke="#6e6e6e" stroke-width="1.3"/><path d="M643.5 13.5v6M640.5 16.5h6" stroke="#6e6e6e" stroke-width="1.1"/><path d="M641 7l4 4" stroke="#bdbdbd" stroke-width="1.2"/>
<path d="M663 10.5a5.3 5.3 0 0 1 9.5 -0.5M672.5 15a5.3 5.3 0 0 1 -9.5 0.5" fill="none" stroke="#333" stroke-width="1.3"/><path d="M661 11l3.2-2 0.3 3.5z" fill="#d4a017"/><path d="M675 14l-3.2 2-0.3-3.5z" fill="#d4a017"/>
<path d="M681.5 11h6.5l-3.25 3.25z" fill="#6e6e6e"/>
<path d="M701 6l3.2 3h-6.4zM701 20l3.2-3h-6.4zM694 13l3-3.2v6.4zM708 13l-3-3.2v6.4z" fill="#d4a017"/><g fill="#111"><rect x="700" y="9" width="2" height="2"/><rect x="700" y="15" width="2" height="2"/><rect x="697" y="12" width="2" height="2"/><rect x="703" y="12" width="2" height="2"/></g>
<circle cx="722.5" cy="11.7" r="5.2" fill="none" stroke="#333" stroke-width="1.6"/><path d="M726.3 15.5l4 4" stroke="#333" stroke-width="1.8"/>
<path d="M722.5 7.5l2.5 3h-5zM722.5 16l2.5-3h-5z" fill="#d4a017"/>
<circle cx="744" cy="11.7" r="5.2" fill="none" stroke="#333" stroke-width="1.6"/><path d="M747.8 15.5l4 4" stroke="#333" stroke-width="1.8"/>
<path d="M744 8.5v6.5M740.8 11.7h6.5" stroke="#d4a017" stroke-width="2.2"/>
<circle cx="766.3" cy="11.7" r="5.2" fill="none" stroke="#333" stroke-width="1.6"/><path d="M770.0999999999999 15.5l4 4" stroke="#333" stroke-width="1.8"/>
<path d="M763.5 10l2.8 1.3v4l-2.8-1.3zM769.1 10l-2.8 1.3v4l2.8-1.3z" fill="#4a8ae8"/><path d="M763.5 10l2.8-1.3 2.8 1.3-2.8 1.3z" fill="#fff" stroke="#555" stroke-width="0.4"/>
<circle cx="788.2" cy="11.7" r="5.2" fill="none" stroke="#333" stroke-width="1.6"/><path d="M792.0 15.5l4 4" stroke="#333" stroke-width="1.8"/>
<path d="M785.4 10l2.8 1.3v4l-2.8-1.3z" fill="#10d010"/><path d="M791 10l-2.8 1.3v4l2.8-1.3z" fill="#4a8ae8"/><path d="M785.4 10l2.8-1.3 2.8 1.3-2.8 1.3z" fill="#fff" stroke="#555" stroke-width="0.4"/>
<rect x="849" y="6" width="6" height="6" fill="#ff0000"/><path d="M854.5 9.5l7 3-3 1 3 3.5-1.5 1.5-3-3.5-1.5 3z" fill="#333"/>
<g fill="none" stroke="#6e6e6e" stroke-width="1.3"><path d="M916.5 13v-6.5h5M916.5 21v-6.5h5M923.5 13v-6.5h7"/><path d="M926 6.5v6"/></g><circle cx="920" cy="9.5" r="1.5" fill="none" stroke="#6e6e6e"/><path d="M917 15.5h4l-4 4z" fill="#9a9a9a"/><path d="M924 6.5h6.5v2h-6.5z" fill="#9a9a9a"/><path d="M926 16l4 2-1.5 0.5 1.5 2" stroke="#7a7a7a" stroke-width="1" fill="none"/>
<path d="M939.5 9.5l3-3h10v10l-3 3h-10z" fill="#fff" stroke="#6e6e6e" stroke-width="1.2"/>
<path d="M939.5 9.5l3-3h10l-3 3z" fill="#fff" stroke="#6e6e6e" stroke-width="1.2"/>
<rect x="943" y="10" width="9.5" height="9.5" fill="#fff" stroke="#6e6e6e" stroke-width="1.2"/>
<path d="M946 12.5l4 2-1.6 0.4 1.4 2.2-0.8 0.5-1.4-2.2-1 1.2z" fill="#6e6e6e"/>
<circle cx="943" cy="8.5" r="1.6" fill="#fff" stroke="#6e6e6e" stroke-width="1"/>
<path d="M961.5 9.5l3-3h10v10l-3 3h-10z" fill="#fff" stroke="#6e6e6e" stroke-width="1.2"/>
<path d="M961.5 9.5l3-3h10l-3 3z" fill="#fff" stroke="#6e6e6e" stroke-width="1.2"/>
<rect x="965" y="10" width="9.5" height="9.5" fill="#fff" stroke="#6e6e6e" stroke-width="1.2"/>
<path d="M968 12.5l4 2-1.6 0.4 1.4 2.2-0.8 0.5-1.4-2.2-1 1.2z" fill="#6e6e6e"/>
<path d="M961.5 9.5l3-3h9" stroke="#9a9a9a" stroke-width="2.2" fill="none"/>
<path d="M983.5 9.5l3-3h10v10l-3 3h-10z" fill="#fff" stroke="#6e6e6e" stroke-width="1.2"/>
<path d="M983.5 9.5l3-3h10l-3 3z" fill="#9a9a9a" stroke="#6e6e6e" stroke-width="1.2"/>
<rect x="987" y="10" width="9.5" height="9.5" fill="#fff" stroke="#6e6e6e" stroke-width="1.2"/>
<path d="M990 12.5l4 2-1.6 0.4 1.4 2.2-0.8 0.5-1.4-2.2-1 1.2z" fill="#6e6e6e"/>
<path d="M1005.5 9.5l3-3h10v10l-3 3h-10z" fill="#b9b9b9" stroke="#6e6e6e" stroke-width="1.2"/>
<path d="M1005.5 9.5l3-3h10l-3 3z" fill="#9a9a9a" stroke="#6e6e6e" stroke-width="1.2"/>
<rect x="1009" y="10" width="9.5" height="9.5" fill="#b9b9b9" stroke="#6e6e6e" stroke-width="1.2"/>
<path d="M1012 12.5l4 2-1.6 0.4 1.4 2.2-0.8 0.5-1.4-2.2-1 1.2z" fill="#6e6e6e"/>
<path d="M1027.0 9.5l3-3h10v10l-3 3h-10z" fill="#fff" stroke="#222" stroke-width="1.3"/>
<path d="M1030.5 10h9.5v9.5h-9.5z" fill="#fff" stroke="#222" stroke-width="1.2"/>
<path d="M1033.5 10v9.5M1036.8 10v9.5M1030.5 13.2h9.5M1030.5 16.4h9.5M1028.5 11v7M1032.5 7l-2 2.5M1035.5 7l-2 2.5" stroke="#3a8af0" stroke-width="0.9"/>
<rect x="1029.5" y="8.2" width="2.5" height="1.5" fill="#10e010"/>
<path d="M1034.5 13l3 1.5-1 0.4 1 1.6-0.6 0.3-1-1.6-0.8 0.8z" fill="#222"/>
<path d="M1049.0 9.5l3-3h10v10l-3 3h-10z" fill="#fff" stroke="#222" stroke-width="1.3"/>
<path d="M1052.5 10h9.5v9.5h-9.5z" fill="#fff" stroke="#222" stroke-width="1.2"/>
<path d="M1055.5 10v9.5M1058.8 10v9.5M1052.5 13.2h9.5M1052.5 16.4h9.5M1050.5 11v7M1054.5 7l-2 2.5M1057.5 7l-2 2.5" stroke="#3a8af0" stroke-width="0.9"/>
<rect x="1052.5" y="7" width="2.5" height="1.5" fill="#10e010"/>
<rect x="1055.5" y="7" width="2.5" height="1.5" fill="#10e010"/>
<rect x="1058.5" y="7" width="2.5" height="1.5" fill="#10e010"/>
<rect x="1051.5" y="8.6" width="2.5" height="1.5" fill="#10e010"/>
<rect x="1055.0" y="8.6" width="2.5" height="1.5" fill="#10e010"/>
<rect x="1058.0" y="8.6" width="2.5" height="1.5" fill="#10e010"/>
<path d="M1056.5 13l3 1.5-1 0.4 1 1.6-0.6 0.3-1-1.6-0.8 0.8z" fill="#222"/>
<path d="M1071.0 9.5l3-3h10v10l-3 3h-10z" fill="#fff" stroke="#222" stroke-width="1.3"/>
<path d="M1074.5 10h9.5v9.5h-9.5z" fill="#fff" stroke="#222" stroke-width="1.2"/>
<path d="M1077.5 10v9.5M1080.8 10v9.5M1074.5 13.2h9.5M1074.5 16.4h9.5M1072.5 11v7M1076.5 7l-2 2.5M1079.5 7l-2 2.5" stroke="#3a8af0" stroke-width="0.9"/>
<rect x="1075.0" y="11" width="2.5" height="1.5" fill="#10e010"/>
<rect x="1078.0" y="11" width="2.5" height="1.5" fill="#10e010"/>
<rect x="1075.0" y="14" width="2.5" height="1.5" fill="#10e010"/>
<rect x="1078.0" y="14" width="2.5" height="1.5" fill="#10e010"/>
<rect x="1075.0" y="17" width="2.5" height="1.5" fill="#10e010"/>
<rect x="1078.0" y="17" width="2.5" height="1.5" fill="#10e010"/>
<path d="M1078.5 13l3 1.5-1 0.4 1 1.6-0.6 0.3-1-1.6-0.8 0.8z" fill="#222"/>
<path d="M1099 12.5l3.5 2-1.5 0.5 2 3-1 0.6-2-3-1 1z" fill="#c0c0c0"/>
<rect x="1115.6" y="6.7" width="14" height="5.8" fill="#fff" stroke="#333" stroke-width="1.3"/><rect x="1117.2" y="8.2" width="1.2" height="3" fill="#333"/><circle cx="1120.6" cy="9.7" r="1.2" fill="none" stroke="#333" stroke-width="1.1"/><circle cx="1124.6" cy="9.7" r="1.2" fill="none" stroke="#333" stroke-width="1.1"/>
<path d="M1120.2 12.3l3.6 1.6-1.4 0.7 2 3.6-1.1 0.7-2-3.6-1.1 1.2z" fill="#d4a017"/>
<rect x="576" y="653" width="3" height="13.5" fill="#7a7a7a"/><path d="M589.5 653.5v12.5l-9.5-6.25z" fill="#c8c8c8"/>
<path d="M599 654.2v11.8l9.5-5.9z" fill="#d4a017"/>
<rect x="620.5" y="654.5" width="11" height="11" fill="#d4a017" stroke="#333" stroke-width="1"/>
<path d="M642 654v12l9-6z" fill="#c8c8c8"/><rect x="652" y="653" width="3" height="14" fill="#7a7a7a"/>
<path d="M670.5 653.5h11M670.5 663.5h11" stroke="#333" stroke-width="1"/>
<path d="M670.5 653v11M673.5 653v11M676.5 653v11M681.5 653v11" stroke="#10e010" stroke-width="1.1"/>
<path d="M669.5 667h8M679 667h3.5" stroke="#ff1010" stroke-width="1.2"/><path d="M671 666.5l1-1.5 1 1.5zM674 666.5l1-1.5 1 1.5zM677 666.5l0-1.5 1 1.5zM680 666.5l1-1.5 1 1.5z" fill="#ff1010"/>
<path d="M692.5 653.5h11M692.5 663.5h11" stroke="#333" stroke-width="1"/>
<path d="M692.5 653v11M695.5 653v11M698.5 653v11M703.5 653v11" stroke="#3399ff" stroke-width="1.1"/>
<path d="M691.5 667h8M701 667h3.5" stroke="#ff1010" stroke-width="1.2"/><path d="M693 666.5l1-1.5 1 1.5zM696 666.5l1-1.5 1 1.5zM699 666.5l0-1.5 1 1.5zM702 666.5l1-1.5 1 1.5z" fill="#ff1010"/>
<rect x="925" y="653" width="14" height="14" fill="#333"/><rect x="925.5" y="656" width="13" height="8" fill="#fff"/>
<rect x="926.5" y="654" width="1.2" height="1" fill="#fff"/>
<rect x="926.5" y="665.5" width="1.2" height="1" fill="#fff"/>
<rect x="928.7" y="654" width="1.2" height="1" fill="#fff"/>
<rect x="928.7" y="665.5" width="1.2" height="1" fill="#fff"/>
<rect x="930.9" y="654" width="1.2" height="1" fill="#fff"/>
<rect x="930.9" y="665.5" width="1.2" height="1" fill="#fff"/>
<rect x="933.1" y="654" width="1.2" height="1" fill="#fff"/>
<rect x="933.1" y="665.5" width="1.2" height="1" fill="#fff"/>
<rect x="935.3" y="654" width="1.2" height="1" fill="#fff"/>
<rect x="935.3" y="665.5" width="1.2" height="1" fill="#fff"/>
<rect x="937.5" y="654" width="1.2" height="1" fill="#fff"/>
<rect x="937.5" y="665.5" width="1.2" height="1" fill="#fff"/>
<path d="M928 662q3-5 7-2" fill="none" stroke="#e02020" stroke-width="1.5"/><rect x="932.5" y="659.5" width="7" height="8" fill="#fff" stroke="#3a8af0" stroke-width="1.3"/><path d="M934.5 659.5v2.5h3v-2.5M934.5 667v-2.5h3v2.5" fill="none" stroke="#3a8af0" stroke-width="1"/>
<circle cx="958.3" cy="658.9" r="5.3" fill="#fff" fill-opacity="0.5" stroke="#333" stroke-width="1.3"/><path d="M962 662.6l4.5 4.5" stroke="#333" stroke-width="1.6"/><path d="M956.3 655.4v7l5.2-3.5z" fill="#d4a017"/>
<rect x="974.6" y="653" width="2" height="4" fill="#ff0000"/>
<rect x="974.6" y="658" width="2" height="4" fill="#00e000"/>
<rect x="974.6" y="663" width="2" height="4" fill="#0000ff"/>
<rect x="977.6" y="653" width="2" height="4" fill="#ff0000"/>
<rect x="977.6" y="658" width="2" height="4" fill="#00e000"/>
<rect x="977.6" y="663" width="2" height="4" fill="#0000ff"/>
<rect x="980.6" y="653" width="2" height="4" fill="#ff0000"/>
<rect x="980.6" y="658" width="2" height="4" fill="#00e000"/>
<rect x="980.6" y="663" width="2" height="4" fill="#0000ff"/>
<rect x="983.6" y="653" width="2" height="4" fill="#ff0000"/>
<rect x="983.6" y="658" width="2" height="4" fill="#00e000"/>
<rect x="983.6" y="663" width="2" height="4" fill="#0000ff"/>
<rect x="986.6" y="653" width="2" height="4" fill="#ff0000"/>
<rect x="986.6" y="658" width="2" height="4" fill="#00e000"/>
<rect x="986.6" y="663" width="2" height="4" fill="#0000ff"/>
<path d="M1001.7 654.5L1011.5 659.3L1008.1 663L999.5 657.7Z" fill="#cdcdcd" stroke="#9c9c9c" stroke-width="1.1" stroke-linejoin="round"/><path d="M1001 656.5l9 4.5" stroke="#a8a8a8" stroke-width="0.8"/>
<rect x="997.2" y="661" width="1.8" height="4.8" fill="#a0a0a0"/><path d="M999 663.2h3.5l2.5-2" fill="none" stroke="#a8a8a8" stroke-width="1.6"/>
<rect x="1025" y="654" width="14" height="11.5" fill="#a8a8a8"/><rect x="1025" y="656.5" width="14" height="6.5" fill="#d0d0d0"/>
<rect x="1026.0" y="654.8" width="1.2" height="1" fill="#fff"/>
<rect x="1026.0" y="663.7" width="1.2" height="1" fill="#fff"/>
<rect x="1028.2" y="654.8" width="1.2" height="1" fill="#fff"/>
<rect x="1028.2" y="663.7" width="1.2" height="1" fill="#fff"/>
<rect x="1030.4" y="654.8" width="1.2" height="1" fill="#fff"/>
<rect x="1030.4" y="663.7" width="1.2" height="1" fill="#fff"/>
<rect x="1032.6" y="654.8" width="1.2" height="1" fill="#fff"/>
<rect x="1032.6" y="663.7" width="1.2" height="1" fill="#fff"/>
<rect x="1034.8" y="654.8" width="1.2" height="1" fill="#fff"/>
<rect x="1034.8" y="663.7" width="1.2" height="1" fill="#fff"/>
<rect x="1037.0" y="654.8" width="1.2" height="1" fill="#fff"/>
<rect x="1037.0" y="663.7" width="1.2" height="1" fill="#fff"/>
<path d="M1029 659.5h6M1028.5 658.5v2" stroke="#9a9a9a" stroke-width="0.9"/>
<rect x="1047" y="654" width="14" height="11.5" fill="#a8a8a8"/><rect x="1047" y="656.5" width="14" height="6.5" fill="#d0d0d0"/>
<rect x="1048.0" y="654.8" width="1.2" height="1" fill="#fff"/>
<rect x="1048.0" y="663.7" width="1.2" height="1" fill="#fff"/>
<rect x="1050.2" y="654.8" width="1.2" height="1" fill="#fff"/>
<rect x="1050.2" y="663.7" width="1.2" height="1" fill="#fff"/>
<rect x="1052.4" y="654.8" width="1.2" height="1" fill="#fff"/>
<rect x="1052.4" y="663.7" width="1.2" height="1" fill="#fff"/>
<rect x="1054.6" y="654.8" width="1.2" height="1" fill="#fff"/>
<rect x="1054.6" y="663.7" width="1.2" height="1" fill="#fff"/>
<rect x="1056.8" y="654.8" width="1.2" height="1" fill="#fff"/>
<rect x="1056.8" y="663.7" width="1.2" height="1" fill="#fff"/>
<rect x="1059.0" y="654.8" width="1.2" height="1" fill="#fff"/>
<rect x="1059.0" y="663.7" width="1.2" height="1" fill="#fff"/>
<path d="M1051 659.5h6M1050.5 658.5v2" stroke="#9a9a9a" stroke-width="0.9"/>
<path d="M1054 666q3 2 6-1" fill="none" stroke="#a8a8a8" stroke-width="1"/>
<path d="M1075.5 661V653.5H1077.5V664.5H1079.8V655.5H1081.8V662.5H1083.8V657.3H1085.7V660.5" fill="none" stroke="#bdbdbd" stroke-width="1.1"/><rect x="1075" y="661" width="1.3" height="6" fill="#777"/>
<rect x="1076" y="660" width="1.2" height="1.2" fill="#666"/>
<rect x="1078" y="660" width="1.2" height="1.2" fill="#666"/>
<rect x="1080" y="660" width="1.2" height="1.2" fill="#666"/>
<rect x="1082" y="660" width="1.2" height="1.2" fill="#666"/>
<rect x="1084" y="660" width="1.2" height="1.2" fill="#666"/>
<rect x="1086" y="660" width="1.2" height="1.2" fill="#666"/>
<rect x="1088" y="660" width="1.2" height="1.2" fill="#666"/>
<path d="M1109 651.5l3.2 2.5 3.2-2.5M1109 654.5l3.2 2.5 3.2-2.5" fill="none" stroke="#6e6e6e" stroke-width="1"/>
<path d="M1109 664h6.5l-3.25 3.25z" fill="#1e1e1e"/></svg>
<div class="t" style="left:5px;top:4.18px;font-size:11.6px;color:#1e1e1e;transform:scaleX(1.0339);transform-origin:0 0;">Outline</div>
<div class="t" style="left:24px;top:27.50px;font-size:12.4px;color:#1e1e1e;transform:scaleX(0.8314);transform-origin:0 0;">Name</div>
<div class="t" style="left:125px;top:28.35px;font-size:11.4px;color:#a8a6ac;transform:scaleX(1.0158);transform-origin:0 0;">Search Outline</div>
<div class="t" style="left:5px;top:437.18px;font-size:11.6px;color:#1e1e1e;transform:scaleX(1.0370);transform-origin:0 0;">Details of "Total Deformation"</div>
<div class="t" style="left:28px;top:50.15px;font-size:11.4px;font-weight:bold;color:#000;transform:scaleX(1.0839);transform-origin:0 0;">Project*</div>
<div class="t" style="left:55px;top:66.15px;font-size:11.4px;font-weight:bold;color:#000;transform:scaleX(1.0130);transform-origin:0 0;">Model (B4, C4)</div>
<div class="t" style="left:82px;top:81.69px;font-size:11px;color:#000;transform:scaleX(0.9629);transform-origin:0 0;">Geometry</div>
<div class="t" style="left:82px;top:97.69px;font-size:11px;color:#000;transform:scaleX(0.9591);transform-origin:0 0;">Materials</div>
<div class="t" style="left:82px;top:113.69px;font-size:11px;color:#000;transform:scaleX(0.9450);transform-origin:0 0;">Cross Sections</div>
<div class="t" style="left:82px;top:129.69px;font-size:11px;color:#000;transform:scaleX(0.9693);transform-origin:0 0;">Coordinate Systems</div>
<div class="t" style="left:82px;top:145.69px;font-size:11px;color:#000;transform:scaleX(0.9108);transform-origin:0 0;">Mesh</div>
<div class="t" style="left:82px;top:162.15px;font-size:11.4px;font-weight:bold;color:#000;transform:scaleX(1.0574);transform-origin:0 0;">Static Structural (B5)</div>
<div class="t" style="left:109px;top:177.69px;font-size:11px;color:#000;transform:scaleX(0.9539);transform-origin:0 0;">Analysis Settings</div>
<div class="t" style="left:109px;top:193.69px;font-size:11px;color:#000;transform:scaleX(0.9681);transform-origin:0 0;">Fixed Support</div>
<div class="t" style="left:109px;top:209.69px;font-size:11px;color:#000;transform:scaleX(0.9069);transform-origin:0 0;">Force</div>
<div class="t" style="left:109px;top:226.15px;font-size:11.4px;font-weight:bold;color:#000;transform:scaleX(1.0208);transform-origin:0 0;">Solution (B6)</div>
<div class="t" style="left:136px;top:241.69px;font-size:11px;color:#000;transform:scaleX(0.9884);transform-origin:0 0;">Solution Information</div>
<div class="t" style="left:136px;top:257.69px;font-size:11px;color:#000;transform:scaleX(0.9930);transform-origin:0 0;">Total Deformation</div>
<div class="t" style="left:82px;top:274.15px;font-size:11.4px;font-weight:bold;color:#000;transform:scaleX(1.0013);transform-origin:0 0;">Eigenvalue Buckling (C5)</div>
<div class="t" style="left:109px;top:289.69px;font-size:11px;color:#000;transform:scaleX(0.9816);transform-origin:0 0;">Pre-Stress (Static Structural)</div>
<div class="t" style="left:109px;top:305.69px;font-size:11px;color:#000;transform:scaleX(0.9539);transform-origin:0 0;">Analysis Settings</div>
<div class="t" style="left:109px;top:322.15px;font-size:11.4px;font-weight:bold;color:#000;transform:scaleX(1.0208);transform-origin:0 0;">Solution (C6)</div>
<div class="t" style="left:136px;top:337.69px;font-size:11px;color:#000;transform:scaleX(0.9884);transform-origin:0 0;">Solution Information</div>
<div class="t" style="left:136px;top:353.69px;font-size:11px;color:#000;transform:scaleX(0.9930);transform-origin:0 0;">Total Deformation</div>
<div class="t" style="left:16px;top:456.60px;font-size:11.1px;font-weight:bold;color:#000;transform:scaleX(0.9186);transform-origin:0 0;">Scope</div>
<div class="t" style="left:16px;top:474.52px;font-size:11.2px;color:#000;transform:scaleX(1.0526);transform-origin:0 0;">Scoping Method</div>
<div class="t" style="left:137px;top:474.52px;font-size:11.2px;color:#000;transform:scaleX(0.9974);transform-origin:0 0;">Geometry Selection</div>
<div class="t" style="left:16px;top:492.52px;font-size:11.2px;color:#000;">Geometry</div>
<div class="t" style="left:137px;top:492.52px;font-size:11.2px;color:#000;">All Bodies</div>
<div class="t" style="left:16px;top:510.60px;font-size:11.1px;font-weight:bold;color:#000;transform:scaleX(0.9985);transform-origin:0 0;">Definition</div>
<div class="t" style="left:16px;top:528.52px;font-size:11.2px;color:#000;">Type</div>
<div class="t" style="left:137px;top:528.52px;font-size:11.2px;color:#000;transform:scaleX(1.0493);transform-origin:0 0;">Total Deformation</div>
<div class="t" style="left:16px;top:546.52px;font-size:11.2px;color:#000;">By</div>
<div class="t" style="left:137px;top:546.52px;font-size:11.2px;color:#000;">Time</div>
<div class="t" style="left:32px;top:564.52px;font-size:11.2px;color:#000;transform:scaleX(0.9812);transform-origin:0 0;">Display Time</div>
<div class="t" style="left:137px;top:564.52px;font-size:11.2px;color:#000;">Last</div>
<div class="t" style="left:16px;top:582.52px;font-size:11.2px;color:#000;transform:scaleX(0.9988);transform-origin:0 0;">Calculate Time History</div>
<div class="t" style="left:137px;top:582.52px;font-size:11.2px;color:#000;">Yes</div>
<div class="t" style="left:16px;top:600.52px;font-size:11.2px;color:#000;">Identifier</div>
<div class="t" style="left:16px;top:618.52px;font-size:11.2px;color:#000;transform:scaleX(0.9904);transform-origin:0 0;">Suppressed</div>
<div class="t" style="left:137px;top:618.52px;font-size:11.2px;color:#000;">No</div>
<div class="t" style="left:16px;top:636.60px;font-size:11.1px;font-weight:bold;color:#000;transform:scaleX(0.9028);transform-origin:0 0;">Results</div>
<div class="t" style="left:32px;top:654.52px;font-size:11.2px;color:#000;transform:scaleX(1.0325);transform-origin:0 0;">Minimum</div>
<div class="t" style="left:137px;top:654.52px;font-size:11.2px;color:#000;">0. mm</div>
<div class="t" style="left:32px;top:672.52px;font-size:11.2px;color:#000;">Maximum</div>
<div class="t" style="left:137px;top:672.52px;font-size:11.2px;color:#000;transform:scaleX(0.9418);transform-origin:0 0;">2.276 mm</div>
<div class="t" style="left:32px;top:690.52px;font-size:11.2px;color:#000;">Average</div>
<div class="t" style="left:137px;top:690.52px;font-size:11.2px;color:#000;">1.138 mm</div>
<div class="t" style="left:16px;top:708.52px;font-size:11.2px;color:#000;transform:scaleX(1.0229);transform-origin:0 0;">Minimum Occurs On</div>
<div class="t" style="left:137px;top:708.52px;font-size:11.2px;color:#000;transform:scaleX(0.9825);transform-origin:0 0;">Geom\Beam (Circular Tube)</div>
<div class="t" style="left:16px;top:726.52px;font-size:11.2px;color:#000;transform:scaleX(0.9984);transform-origin:0 0;">Maximum Occurs On</div>
<div class="t" style="left:137px;top:726.52px;font-size:11.2px;color:#000;transform:scaleX(0.9825);transform-origin:0 0;">Geom\Beam (Circular Tube)</div>
<div class="t" style="left:16px;top:744.60px;font-size:11.1px;font-weight:bold;color:#000;transform:scaleX(1.0058);transform-origin:0 0;">Information</div>
<div class="t" style="left:810px;top:7.18px;font-size:11.6px;color:#1e1e1e;transform:scaleX(0.9584);transform-origin:0 0;">Select</div>
<div class="t" style="left:866.5px;top:7.18px;font-size:11.6px;color:#1e1e1e;transform:scaleX(1.0545);transform-origin:0 0;">Mode</div>
<div class="t" style="left:500px;top:41.85px;font-size:11.4px;font-weight:bold;color:#000;transform:scaleX(1.0072);transform-origin:0 0;">B: Static Structural</div>
<div class="t" style="left:500px;top:56.85px;font-size:11.4px;color:#000;transform:scaleX(1.0633);transform-origin:0 0;">Total Deformation</div>
<div class="t" style="left:500px;top:71.85px;font-size:11.4px;color:#000;transform:scaleX(1.0467);transform-origin:0 0;">Type: Total Deformation</div>
<div class="t" style="left:500px;top:86.85px;font-size:11.4px;color:#000;transform:scaleX(1.0658);transform-origin:0 0;">Unit: mm</div>
<div class="t" style="left:500px;top:101.85px;font-size:11.4px;color:#000;transform:scaleX(0.9711);transform-origin:0 0;">Time: 1</div>
<div class="t" style="left:500px;top:116.85px;font-size:11.4px;color:#000;transform:scaleX(0.9329);transform-origin:0 0;">10.05.2021 21:04</div>
<div class="t" style="left:524.5px;top:146.18px;font-size:11.6px;font-weight:bold;color:#000;transform:scaleX(1.0435);transform-origin:0 0;">2.276 Max</div>
<div class="t" style="left:524.5px;top:162.78px;font-size:11.6px;color:#000;transform:scaleX(0.8822);transform-origin:0 0;">2.0231</div>
<div class="t" style="left:524.5px;top:179.38px;font-size:11.6px;color:#000;transform:scaleX(0.8822);transform-origin:0 0;">1.7702</div>
<div class="t" style="left:524.5px;top:195.98px;font-size:11.6px;color:#000;transform:scaleX(0.8822);transform-origin:0 0;">1.5173</div>
<div class="t" style="left:524.5px;top:212.58px;font-size:11.6px;color:#000;transform:scaleX(0.8822);transform-origin:0 0;">1.2644</div>
<div class="t" style="left:524.5px;top:229.18px;font-size:11.6px;color:#000;transform:scaleX(0.9041);transform-origin:0 0;">1.0116</div>
<div class="t" style="left:524.5px;top:245.78px;font-size:11.6px;color:#000;transform:scaleX(0.9158);transform-origin:0 0;">0.75867</div>
<div class="t" style="left:524.5px;top:262.38px;font-size:11.6px;color:#000;transform:scaleX(0.9158);transform-origin:0 0;">0.50578</div>
<div class="t" style="left:524.5px;top:278.98px;font-size:11.6px;color:#000;transform:scaleX(0.9158);transform-origin:0 0;">0.25289</div>
<div class="t" style="left:524.5px;top:295.58px;font-size:11.6px;font-weight:bold;color:#000;transform:scaleX(1.0052);transform-origin:0 0;">0 Min</div>
<div class="t" style="left:1002px;top:562.29px;font-size:11px;color:#000;transform:scaleX(0.9154);transform-origin:0 0;">0</div>
<div class="t" style="left:1088px;top:592.29px;font-size:11px;color:#000;transform:scaleX(0.9905);transform-origin:0 0;">1e+03</div>
<div class="t" style="left:490px;top:631.18px;font-size:11.6px;color:#1e1e1e;transform:scaleX(0.9460);transform-origin:0 0;">Graph</div>
<div class="t" style="left:511.2px;top:654.01px;font-size:11.8px;color:#1e1e1e;transform:scaleX(1.0539);transform-origin:0 0;">Animation</div>
<div class="t" style="left:719px;top:655.18px;font-size:11.6px;color:#1e1e1e;transform:scaleX(0.9470);transform-origin:0 0;">20 Frames</div>
<div class="t" style="left:819px;top:655.18px;font-size:11.6px;color:#1e1e1e;transform:scaleX(0.9833);transform-origin:0 0;">2 Sec (Auto)</div>
<div class="t" style="left:491.5px;top:866.68px;font-size:11.6px;color:#1e1e1e;transform:scaleX(1.0230);transform-origin:0 0;">Graphics Annotations</div>
<div class="t" style="left:617.3px;top:866.68px;font-size:11.6px;color:#1e1e1e;transform:scaleX(0.9533);transform-origin:0 0;">Messages</div>
<div class="t" style="left:681px;top:866.68px;font-size:11.6px;color:#1e7ad2;transform:scaleX(0.9460);transform-origin:0 0;">Graph</div>
<div class="t" style="left:811px;top:817.12px;font-size:12.5px;font-weight:bold;color:#000;transform:scaleX(0.9164);transform-origin:0 0;">[s]</div>
<div class="t" style="left:496.3px;top:738.35px;width:40px;height:13.3px;font-size:13.3px;font-weight:bold;text-align:center;transform:rotate(-90deg) scaleX(1.05);transform-origin:20px 6.65px">[mm]</div>
<div class="t" style="left:89.5px;top:294.5px;font-size:8px;font-weight:bold;color:#404040;letter-spacing:-0.3px">T=0</div>
<div class="t" style="left:1092px;top:6.5px;font-size:6.5px;color:#b0b0b0;letter-spacing:0.2px">X.Y.Z</div>
</body></html>
